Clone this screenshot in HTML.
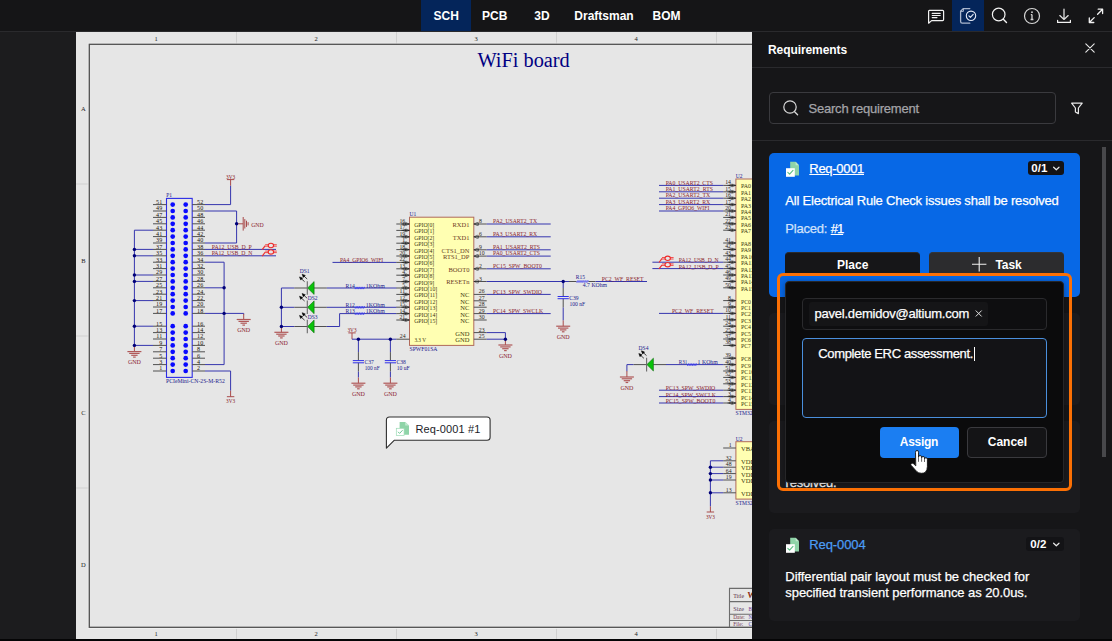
<!DOCTYPE html>
<html>
<head>
<meta charset="utf-8">
<title>Requirements</title>
<style>
*{box-sizing:border-box;margin:0;padding:0}
html,body{width:1112px;height:641px;overflow:hidden;background:#0a0a0b}
body{position:relative;font-family:"Liberation Sans",sans-serif;font-size:13px;color:#fff}
.abs{position:absolute}
.t{position:absolute;white-space:pre;line-height:16px;height:16px;-webkit-text-stroke:0.25px currentColor}
.t.b{-webkit-text-stroke:0}
#topbar{left:0;top:0;width:1112px;height:32px;background:#151517;border-bottom:1px solid #2a2a2d}
#leftdark{left:0;top:32px;width:76px;height:607px;background:#1c1c1e}
#sheet{left:76px;top:32px;width:676px;height:607px;background:#e6e6e6;overflow:hidden}
#panel{left:752px;top:32px;width:360px;height:607px;background:#161618}
.tab{position:absolute;top:1px;height:31px;font-weight:700;font-size:12px;line-height:31px;white-space:pre}
.card{position:absolute;left:769px;width:311px;background:#1b1b1e;border-radius:5px}
.badge{position:absolute;background:#131316;border-radius:3px;height:14px}
.b{font-weight:700}
</style>
</head>
<body>
<!-- top bar -->
<div id="topbar" class="abs"></div>
<div class="abs" style="left:421px;top:0;width:50px;height:31px;background:#04255a"></div>
<div class="tab" style="left:433.5px">SCH</div>
<div class="tab" style="left:482px">PCB</div>
<div class="tab" style="left:534.3px">3D</div>
<div class="tab" style="left:574.3px">Draftsman</div>
<div class="tab" style="left:652.5px">BOM</div>
<div class="abs" style="left:952px;top:0;width:32px;height:31px;background:#04255a"></div>
<svg class="abs" style="left:920px;top:0" width="192" height="32" viewBox="920 0 192 32" fill="none" stroke="#f2f2f2" stroke-width="1.2" stroke-linecap="round" stroke-linejoin="round">
<!-- comment -->
<path d="M929.4,10.3 H942.6 Q943.6,10.3 943.6,11.3 V19.6 Q943.6,20.6 942.6,20.6 H931.6 L928.6,23.2 V11.3 Q928.6,10.3 929.4,10.3 Z"/>
<path d="M932.2,13.4 H940.2 M932.2,15.5 H940.2 M932.2,17.6 H937" stroke-width="1.1"/>
<!-- requirements -->
<path d="M969.8,8.6 H963.2 L960.6,11.2 V21.6 Q960.6,23.2 962.2,23.2 H969.8" stroke="#a9b6cd" stroke-width="1.3"/>
<path d="M963.4,8.8 V11.4 H960.8" stroke="#a9b6cd" stroke-width="1"/>
<circle cx="971" cy="15.8" r="4.7" stroke="#e4eaf6" stroke-width="1.1"/>
<path d="M968.9,15.9 L970.4,17.4 L973.2,14.4" stroke="#e4eaf6" stroke-width="1.1"/>
<!-- search -->
<circle cx="998.7" cy="14.5" r="6.3"/>
<path d="M1003.3,19.2 L1006.5,22.5" stroke-width="1.4"/>
<!-- info -->
<circle cx="1032" cy="16" r="7.5" stroke="#d6d6d6"/>
<path d="M1032,14.6 V19.4 M1030.8,14.6 H1032 M1030.6,19.5 H1033.4" stroke="#d6d6d6" stroke-width="1.3" stroke-linecap="butt"/>
<circle cx="1032" cy="12.2" r="0.9" fill="#d6d6d6" stroke="none"/>
<!-- download -->
<path d="M1064,9.2 V19 M1059.8,15.6 L1064,19.4 L1068.2,15.6" stroke="#dcdcdc" stroke-width="1.3"/>
<path d="M1057.6,20.3 V22.4 H1070.4 V20.3" stroke-width="1.2"/>
<!-- expand -->
<path d="M1097.6,14.2 L1102.6,9.2 M1098.2,9.2 H1102.6 V13.6" stroke-width="1.3"/>
<path d="M1094.2,17.6 L1089.3,22.5 M1089.3,18 V22.5 H1093.8" stroke-width="1.3"/>
</svg>

<div id="leftdark" class="abs"></div>
<div id="sheet" class="abs"></div>
<!-- SCH_BEGIN -->
<svg class="abs" id="sch" style="left:76px;top:32px" width="676" height="607" viewBox="76 32 676 607" font-family="Liberation Serif, serif" fill="none" shape-rendering="auto">
<rect x="76" y="32" width="676" height="607" fill="#e6e6e6"/>
<path d="M236.5,32.0L236.5,44.3" stroke="#d0d0d0" stroke-width="1"/>
<path d="M236.5,627.3L236.5,639.0" stroke="#d0d0d0" stroke-width="1"/>
<path d="M396.5,32.0L396.5,44.3" stroke="#d0d0d0" stroke-width="1"/>
<path d="M396.5,627.3L396.5,639.0" stroke="#d0d0d0" stroke-width="1"/>
<path d="M556.5,32.0L556.5,44.3" stroke="#d0d0d0" stroke-width="1"/>
<path d="M556.5,627.3L556.5,639.0" stroke="#d0d0d0" stroke-width="1"/>
<path d="M716.5,32.0L716.5,44.3" stroke="#d0d0d0" stroke-width="1"/>
<path d="M716.5,627.3L716.5,639.0" stroke="#d0d0d0" stroke-width="1"/>
<path d="M76.0,184.0L89.3,184.0" stroke="#d0d0d0" stroke-width="1"/>
<path d="M76.0,336.0L89.3,336.0" stroke="#d0d0d0" stroke-width="1"/>
<path d="M76.0,488.0L89.3,488.0" stroke="#d0d0d0" stroke-width="1"/>
<rect x="88.2" y="43.2" width="700" height="585.2" fill="none" stroke="#f0f0f0" stroke-width="0.9"/>
<rect x="89.3" y="44.3" width="700" height="583" fill="none" stroke="#505050" stroke-width="1.3"/>
<text x="156.0" y="40.6" font-size="6.5" fill="#1e1e1e" text-anchor="middle">1</text>
<text x="156.0" y="635.8" font-size="6.5" fill="#1e1e1e" text-anchor="middle">1</text>
<text x="316.0" y="40.6" font-size="6.5" fill="#1e1e1e" text-anchor="middle">2</text>
<text x="316.0" y="635.8" font-size="6.5" fill="#1e1e1e" text-anchor="middle">2</text>
<text x="476.0" y="40.6" font-size="6.5" fill="#1e1e1e" text-anchor="middle">3</text>
<text x="476.0" y="635.8" font-size="6.5" fill="#1e1e1e" text-anchor="middle">3</text>
<text x="636.0" y="40.6" font-size="6.5" fill="#1e1e1e" text-anchor="middle">4</text>
<text x="636.0" y="635.8" font-size="6.5" fill="#1e1e1e" text-anchor="middle">4</text>
<text x="83.4" y="110.6" font-size="6.5" fill="#1e1e1e" text-anchor="middle">A</text>
<text x="83.4" y="262.6" font-size="6.5" fill="#1e1e1e" text-anchor="middle">B</text>
<text x="83.4" y="414.6" font-size="6.5" fill="#1e1e1e" text-anchor="middle">C</text>
<text x="83.4" y="566.6" font-size="6.5" fill="#1e1e1e" text-anchor="middle">D</text>
<text x="477.4" y="66.8" font-size="20" fill="#000082" text-anchor="start" textLength="92.4" lengthAdjust="spacingAndGlyphs">WiFi board</text>
<rect x="166.5" y="198.4" width="25.7" height="179" fill="none" stroke="#2c2ce6" stroke-width="1.1"/>
<text x="166.3" y="197.4" font-size="5.5" fill="#1a1a8c" text-anchor="start">P1</text>
<text x="166.0" y="383.2" font-size="6.5" fill="#1a1a8c" text-anchor="start" textLength="58.8" lengthAdjust="spacingAndGlyphs">PCIeMini-CN-2S-M-R52</text>
<path d="M153.0,204.6L166.5,204.6" stroke="#505050" stroke-width="1"/>
<path d="M192.2,204.6L205.0,204.6" stroke="#505050" stroke-width="1"/>
<circle cx="172.7" cy="204.6" r="2.35" fill="#0a0aff"/><circle cx="185.7" cy="204.6" r="2.35" fill="#0a0aff"/>
<text x="162.2" y="204.0" font-size="6.1" fill="#1c140a" text-anchor="end">51</text>
<text x="197.1" y="204.0" font-size="6.1" fill="#1c140a" text-anchor="start">52</text>
<path d="M153.0,211.0L166.5,211.0" stroke="#505050" stroke-width="1"/>
<path d="M192.2,211.0L205.0,211.0" stroke="#505050" stroke-width="1"/>
<circle cx="172.7" cy="211.0" r="2.35" fill="#0a0aff"/><circle cx="185.7" cy="211.0" r="2.35" fill="#0a0aff"/>
<text x="162.2" y="210.4" font-size="6.1" fill="#1c140a" text-anchor="end">49</text>
<text x="197.1" y="210.4" font-size="6.1" fill="#1c140a" text-anchor="start">50</text>
<path d="M153.0,217.4L166.5,217.4" stroke="#505050" stroke-width="1"/>
<path d="M192.2,217.4L205.0,217.4" stroke="#505050" stroke-width="1"/>
<circle cx="172.7" cy="217.4" r="2.35" fill="#0a0aff"/><circle cx="185.7" cy="217.4" r="2.35" fill="#0a0aff"/>
<text x="162.2" y="216.8" font-size="6.1" fill="#1c140a" text-anchor="end">47</text>
<text x="197.1" y="216.8" font-size="6.1" fill="#1c140a" text-anchor="start">48</text>
<path d="M153.0,223.8L166.5,223.8" stroke="#505050" stroke-width="1"/>
<path d="M192.2,223.8L205.0,223.8" stroke="#505050" stroke-width="1"/>
<circle cx="172.7" cy="223.8" r="2.35" fill="#0a0aff"/><circle cx="185.7" cy="223.8" r="2.35" fill="#0a0aff"/>
<text x="162.2" y="223.2" font-size="6.1" fill="#1c140a" text-anchor="end">45</text>
<text x="197.1" y="223.2" font-size="6.1" fill="#1c140a" text-anchor="start">46</text>
<path d="M153.0,230.2L166.5,230.2" stroke="#505050" stroke-width="1"/>
<path d="M192.2,230.2L205.0,230.2" stroke="#505050" stroke-width="1"/>
<circle cx="172.7" cy="230.2" r="2.35" fill="#0a0aff"/><circle cx="185.7" cy="230.2" r="2.35" fill="#0a0aff"/>
<text x="162.2" y="229.6" font-size="6.1" fill="#1c140a" text-anchor="end">43</text>
<text x="197.1" y="229.6" font-size="6.1" fill="#1c140a" text-anchor="start">44</text>
<path d="M153.0,236.6L166.5,236.6" stroke="#505050" stroke-width="1"/>
<path d="M192.2,236.6L205.0,236.6" stroke="#505050" stroke-width="1"/>
<circle cx="172.7" cy="236.6" r="2.35" fill="#0a0aff"/><circle cx="185.7" cy="236.6" r="2.35" fill="#0a0aff"/>
<text x="162.2" y="236.0" font-size="6.1" fill="#1c140a" text-anchor="end">41</text>
<text x="197.1" y="236.0" font-size="6.1" fill="#1c140a" text-anchor="start">42</text>
<path d="M153.0,243.0L166.5,243.0" stroke="#505050" stroke-width="1"/>
<path d="M192.2,243.0L205.0,243.0" stroke="#505050" stroke-width="1"/>
<circle cx="172.7" cy="243.0" r="2.35" fill="#0a0aff"/><circle cx="185.7" cy="243.0" r="2.35" fill="#0a0aff"/>
<text x="162.2" y="242.4" font-size="6.1" fill="#1c140a" text-anchor="end">39</text>
<text x="197.1" y="242.4" font-size="6.1" fill="#1c140a" text-anchor="start">40</text>
<path d="M153.0,249.4L166.5,249.4" stroke="#505050" stroke-width="1"/>
<path d="M192.2,249.4L205.0,249.4" stroke="#505050" stroke-width="1"/>
<circle cx="172.7" cy="249.4" r="2.35" fill="#0a0aff"/><circle cx="185.7" cy="249.4" r="2.35" fill="#0a0aff"/>
<text x="162.2" y="248.8" font-size="6.1" fill="#1c140a" text-anchor="end">37</text>
<text x="197.1" y="248.8" font-size="6.1" fill="#1c140a" text-anchor="start">38</text>
<path d="M153.0,255.8L166.5,255.8" stroke="#505050" stroke-width="1"/>
<path d="M192.2,255.8L205.0,255.8" stroke="#505050" stroke-width="1"/>
<circle cx="172.7" cy="255.8" r="2.35" fill="#0a0aff"/><circle cx="185.7" cy="255.8" r="2.35" fill="#0a0aff"/>
<text x="162.2" y="255.2" font-size="6.1" fill="#1c140a" text-anchor="end">35</text>
<text x="197.1" y="255.2" font-size="6.1" fill="#1c140a" text-anchor="start">36</text>
<path d="M153.0,262.2L166.5,262.2" stroke="#505050" stroke-width="1"/>
<path d="M192.2,262.2L205.0,262.2" stroke="#505050" stroke-width="1"/>
<circle cx="172.7" cy="262.2" r="2.35" fill="#0a0aff"/><circle cx="185.7" cy="262.2" r="2.35" fill="#0a0aff"/>
<text x="162.2" y="261.6" font-size="6.1" fill="#1c140a" text-anchor="end">33</text>
<text x="197.1" y="261.6" font-size="6.1" fill="#1c140a" text-anchor="start">34</text>
<path d="M153.0,268.6L166.5,268.6" stroke="#505050" stroke-width="1"/>
<path d="M192.2,268.6L205.0,268.6" stroke="#505050" stroke-width="1"/>
<circle cx="172.7" cy="268.6" r="2.35" fill="#0a0aff"/><circle cx="185.7" cy="268.6" r="2.35" fill="#0a0aff"/>
<text x="162.2" y="268.0" font-size="6.1" fill="#1c140a" text-anchor="end">31</text>
<text x="197.1" y="268.0" font-size="6.1" fill="#1c140a" text-anchor="start">32</text>
<path d="M153.0,275.0L166.5,275.0" stroke="#505050" stroke-width="1"/>
<path d="M192.2,275.0L205.0,275.0" stroke="#505050" stroke-width="1"/>
<circle cx="172.7" cy="275.0" r="2.35" fill="#0a0aff"/><circle cx="185.7" cy="275.0" r="2.35" fill="#0a0aff"/>
<text x="162.2" y="274.4" font-size="6.1" fill="#1c140a" text-anchor="end">29</text>
<text x="197.1" y="274.4" font-size="6.1" fill="#1c140a" text-anchor="start">30</text>
<path d="M153.0,281.4L166.5,281.4" stroke="#505050" stroke-width="1"/>
<path d="M192.2,281.4L205.0,281.4" stroke="#505050" stroke-width="1"/>
<circle cx="172.7" cy="281.4" r="2.35" fill="#0a0aff"/><circle cx="185.7" cy="281.4" r="2.35" fill="#0a0aff"/>
<text x="162.2" y="280.8" font-size="6.1" fill="#1c140a" text-anchor="end">27</text>
<text x="197.1" y="280.8" font-size="6.1" fill="#1c140a" text-anchor="start">28</text>
<path d="M153.0,287.8L166.5,287.8" stroke="#505050" stroke-width="1"/>
<path d="M192.2,287.8L205.0,287.8" stroke="#505050" stroke-width="1"/>
<circle cx="172.7" cy="287.8" r="2.35" fill="#0a0aff"/><circle cx="185.7" cy="287.8" r="2.35" fill="#0a0aff"/>
<text x="162.2" y="287.2" font-size="6.1" fill="#1c140a" text-anchor="end">25</text>
<text x="197.1" y="287.2" font-size="6.1" fill="#1c140a" text-anchor="start">26</text>
<path d="M153.0,294.2L166.5,294.2" stroke="#505050" stroke-width="1"/>
<path d="M192.2,294.2L205.0,294.2" stroke="#505050" stroke-width="1"/>
<circle cx="172.7" cy="294.2" r="2.35" fill="#0a0aff"/><circle cx="185.7" cy="294.2" r="2.35" fill="#0a0aff"/>
<text x="162.2" y="293.6" font-size="6.1" fill="#1c140a" text-anchor="end">23</text>
<text x="197.1" y="293.6" font-size="6.1" fill="#1c140a" text-anchor="start">24</text>
<path d="M153.0,300.6L166.5,300.6" stroke="#505050" stroke-width="1"/>
<path d="M192.2,300.6L205.0,300.6" stroke="#505050" stroke-width="1"/>
<circle cx="172.7" cy="300.6" r="2.35" fill="#0a0aff"/><circle cx="185.7" cy="300.6" r="2.35" fill="#0a0aff"/>
<text x="162.2" y="300.0" font-size="6.1" fill="#1c140a" text-anchor="end">21</text>
<text x="197.1" y="300.0" font-size="6.1" fill="#1c140a" text-anchor="start">22</text>
<path d="M153.0,307.0L166.5,307.0" stroke="#505050" stroke-width="1"/>
<path d="M192.2,307.0L205.0,307.0" stroke="#505050" stroke-width="1"/>
<circle cx="172.7" cy="307.0" r="2.35" fill="#0a0aff"/><circle cx="185.7" cy="307.0" r="2.35" fill="#0a0aff"/>
<text x="162.2" y="306.4" font-size="6.1" fill="#1c140a" text-anchor="end">19</text>
<text x="197.1" y="306.4" font-size="6.1" fill="#1c140a" text-anchor="start">20</text>
<path d="M153.0,313.4L166.5,313.4" stroke="#505050" stroke-width="1"/>
<path d="M192.2,313.4L205.0,313.4" stroke="#505050" stroke-width="1"/>
<circle cx="172.7" cy="313.4" r="2.35" fill="#0a0aff"/><circle cx="185.7" cy="313.4" r="2.35" fill="#0a0aff"/>
<text x="162.2" y="312.8" font-size="6.1" fill="#1c140a" text-anchor="end">17</text>
<text x="197.1" y="312.8" font-size="6.1" fill="#1c140a" text-anchor="start">18</text>
<path d="M153.0,326.2L166.5,326.2" stroke="#505050" stroke-width="1"/>
<path d="M192.2,326.2L205.0,326.2" stroke="#505050" stroke-width="1"/>
<circle cx="172.7" cy="326.2" r="2.35" fill="#0a0aff"/><circle cx="185.7" cy="326.2" r="2.35" fill="#0a0aff"/>
<text x="162.2" y="325.6" font-size="6.1" fill="#1c140a" text-anchor="end">15</text>
<text x="197.1" y="325.6" font-size="6.1" fill="#1c140a" text-anchor="start">16</text>
<path d="M153.0,332.6L166.5,332.6" stroke="#505050" stroke-width="1"/>
<path d="M192.2,332.6L205.0,332.6" stroke="#505050" stroke-width="1"/>
<circle cx="172.7" cy="332.6" r="2.35" fill="#0a0aff"/><circle cx="185.7" cy="332.6" r="2.35" fill="#0a0aff"/>
<text x="162.2" y="332.0" font-size="6.1" fill="#1c140a" text-anchor="end">13</text>
<text x="197.1" y="332.0" font-size="6.1" fill="#1c140a" text-anchor="start">14</text>
<path d="M153.0,339.0L166.5,339.0" stroke="#505050" stroke-width="1"/>
<path d="M192.2,339.0L205.0,339.0" stroke="#505050" stroke-width="1"/>
<circle cx="172.7" cy="339.0" r="2.35" fill="#0a0aff"/><circle cx="185.7" cy="339.0" r="2.35" fill="#0a0aff"/>
<text x="162.2" y="338.4" font-size="6.1" fill="#1c140a" text-anchor="end">11</text>
<text x="197.1" y="338.4" font-size="6.1" fill="#1c140a" text-anchor="start">12</text>
<path d="M153.0,345.4L166.5,345.4" stroke="#505050" stroke-width="1"/>
<path d="M192.2,345.4L205.0,345.4" stroke="#505050" stroke-width="1"/>
<circle cx="172.7" cy="345.4" r="2.35" fill="#0a0aff"/><circle cx="185.7" cy="345.4" r="2.35" fill="#0a0aff"/>
<text x="162.2" y="344.8" font-size="6.1" fill="#1c140a" text-anchor="end">9</text>
<text x="197.1" y="344.8" font-size="6.1" fill="#1c140a" text-anchor="start">10</text>
<path d="M153.0,351.8L166.5,351.8" stroke="#505050" stroke-width="1"/>
<path d="M192.2,351.8L205.0,351.8" stroke="#505050" stroke-width="1"/>
<circle cx="172.7" cy="351.8" r="2.35" fill="#0a0aff"/><circle cx="185.7" cy="351.8" r="2.35" fill="#0a0aff"/>
<text x="162.2" y="351.2" font-size="6.1" fill="#1c140a" text-anchor="end">7</text>
<text x="197.1" y="351.2" font-size="6.1" fill="#1c140a" text-anchor="start">8</text>
<path d="M153.0,358.2L166.5,358.2" stroke="#505050" stroke-width="1"/>
<path d="M192.2,358.2L205.0,358.2" stroke="#505050" stroke-width="1"/>
<circle cx="172.7" cy="358.2" r="2.35" fill="#0a0aff"/><circle cx="185.7" cy="358.2" r="2.35" fill="#0a0aff"/>
<text x="162.2" y="357.6" font-size="6.1" fill="#1c140a" text-anchor="end">5</text>
<text x="197.1" y="357.6" font-size="6.1" fill="#1c140a" text-anchor="start">6</text>
<path d="M153.0,364.6L166.5,364.6" stroke="#505050" stroke-width="1"/>
<path d="M192.2,364.6L205.0,364.6" stroke="#505050" stroke-width="1"/>
<circle cx="172.7" cy="364.6" r="2.35" fill="#0a0aff"/><circle cx="185.7" cy="364.6" r="2.35" fill="#0a0aff"/>
<text x="162.2" y="364.0" font-size="6.1" fill="#1c140a" text-anchor="end">3</text>
<text x="197.1" y="364.0" font-size="6.1" fill="#1c140a" text-anchor="start">4</text>
<path d="M153.0,371.0L166.5,371.0" stroke="#505050" stroke-width="1"/>
<path d="M192.2,371.0L205.0,371.0" stroke="#505050" stroke-width="1"/>
<circle cx="172.7" cy="371.0" r="2.35" fill="#0a0aff"/><circle cx="185.7" cy="371.0" r="2.35" fill="#0a0aff"/>
<text x="162.2" y="370.4" font-size="6.1" fill="#1c140a" text-anchor="end">1</text>
<text x="197.1" y="370.4" font-size="6.1" fill="#1c140a" text-anchor="start">2</text>
<path d="M205.0,204.6L230.6,204.6L230.6,185.6" stroke="#3535ae" stroke-width="1" fill="none"/>
<path d="M230.6,185.6L230.6,179.6" stroke="#a84a4a" stroke-width="1"/>
<path d="M226.9,179.6L234.3,179.6" stroke="#a84a4a" stroke-width="1"/>
<text x="230.6" y="179.0" font-size="6.5" fill="#8a1c2c" text-anchor="middle" textLength="9.0" lengthAdjust="spacingAndGlyphs">3V3</text>
<path d="M205.0,211.0L236.6,211.0L236.6,243.0L205.0,243.0" stroke="#3535ae" stroke-width="1" fill="none"/>
<path d="M236.6,223.8L243.2,223.8" stroke="#a84a4a" stroke-width="1"/>
<path d="M243.2,217.0L243.2,230.6" stroke="#a84a4a" stroke-width="1"/>
<path d="M244.8,219.1L244.8,228.5" stroke="#a84a4a" stroke-width="1"/>
<path d="M246.5,220.7L246.5,226.9" stroke="#a84a4a" stroke-width="1"/>
<path d="M248.1,222.2L248.1,225.4" stroke="#a84a4a" stroke-width="1"/>
<text x="251.2" y="226.7" font-size="6.5" fill="#8a1c2c" text-anchor="start" textLength="12.5" lengthAdjust="spacingAndGlyphs">GND</text>
<path d="M205.0,249.4L276.0,249.4" stroke="#3535ae" stroke-width="1"/>
<path d="M205.0,255.8L276.0,255.8" stroke="#3535ae" stroke-width="1"/>
<text x="211.7" y="248.6" font-size="6.5" fill="#8a1c2c" text-anchor="start" textLength="40.0" lengthAdjust="spacingAndGlyphs">PA12_USB_D_P</text>
<text x="211.7" y="255.0" font-size="6.5" fill="#8a1c2c" text-anchor="start" textLength="40.6" lengthAdjust="spacingAndGlyphs">PA12_USB_D_N</text>
<path d="M262.2,249.7L265.3,245.6" stroke="#ee3030" stroke-width="1.2" fill="none"/>
<path d="M265.2,244.7H276.8M265.2,246.2H276.8" stroke="#f04040" stroke-width="0.9" fill="none"/>
<ellipse cx="270.9" cy="245.5" rx="2.7" ry="2.2" stroke="#ee2a2a" stroke-width="1.1" fill="#e6e6e6"/>
<path d="M262.2,256.1L265.3,252.0" stroke="#ee3030" stroke-width="1.2" fill="none"/>
<path d="M265.2,251.1H276.8M265.2,252.6H276.8" stroke="#f04040" stroke-width="0.9" fill="none"/>
<ellipse cx="270.9" cy="251.9" rx="2.7" ry="2.2" stroke="#ee2a2a" stroke-width="1.1" fill="#e6e6e6"/>
<path d="M205.0,262.2L224.1,262.2L224.1,364.6L205.0,364.6" stroke="#3535ae" stroke-width="1" fill="none"/>
<path d="M205.0,287.8L224.1,287.8" stroke="#3535ae" stroke-width="1"/>
<path d="M205.0,313.4L243.7,313.4L243.7,314.4" stroke="#3535ae" stroke-width="1" fill="none"/>
<path d="M243.7,313.9L243.7,319.5" stroke="#a84a4a" stroke-width="1"/>
<path d="M236.7,319.5L250.7,319.5" stroke="#b05858" stroke-width="1.2"/>
<path d="M238.5,321.4L248.9,321.4" stroke="#b05858" stroke-width="1.2"/>
<path d="M240.5,323.2L246.9,323.2" stroke="#b05858" stroke-width="1.2"/>
<path d="M242.4,325.1L245.0,325.1" stroke="#b05858" stroke-width="1.2"/>
<text x="243.7" y="332.1" font-size="6.5" fill="#8a1c2c" text-anchor="middle" textLength="13.0" lengthAdjust="spacingAndGlyphs">GND</text>
<path d="M205.0,371.0L230.6,371.0L230.6,390.7" stroke="#3535ae" stroke-width="1" fill="none"/>
<path d="M230.6,390.7L230.6,396.7" stroke="#a84a4a" stroke-width="1"/>
<path d="M226.9,396.7L234.3,396.7" stroke="#a84a4a" stroke-width="1"/>
<text x="230.6" y="403.3" font-size="6.5" fill="#8a1c2c" text-anchor="middle" textLength="9.0" lengthAdjust="spacingAndGlyphs">3V3</text>
<path d="M153.0,230.2L134.4,230.2L134.4,345.4" stroke="#3535ae" stroke-width="1" fill="none"/>
<path d="M134.4,249.4L153.0,249.4" stroke="#3535ae" stroke-width="1"/>
<path d="M134.4,255.8L153.0,255.8" stroke="#3535ae" stroke-width="1"/>
<path d="M134.4,275.0L153.0,275.0" stroke="#3535ae" stroke-width="1"/>
<path d="M134.4,281.4L153.0,281.4" stroke="#3535ae" stroke-width="1"/>
<path d="M134.4,300.6L153.0,300.6" stroke="#3535ae" stroke-width="1"/>
<path d="M134.4,326.2L153.0,326.2" stroke="#3535ae" stroke-width="1"/>
<path d="M134.4,345.4L153.0,345.4" stroke="#3535ae" stroke-width="1"/>
<path d="M134.4,345.4L134.4,351.6" stroke="#a84a4a" stroke-width="1"/>
<path d="M127.4,351.6L141.4,351.6" stroke="#b05858" stroke-width="1.2"/>
<path d="M129.2,353.4L139.6,353.4" stroke="#b05858" stroke-width="1.2"/>
<path d="M131.2,355.3L137.6,355.3" stroke="#b05858" stroke-width="1.2"/>
<path d="M133.1,357.1L135.7,357.1" stroke="#b05858" stroke-width="1.2"/>
<text x="134.4" y="364.2" font-size="6.5" fill="#8a1c2c" text-anchor="middle" textLength="13.0" lengthAdjust="spacingAndGlyphs">GND</text>
<path d="M294.3,288.0L281.4,288.0L281.4,326.5L294.3,326.5" stroke="#3535ae" stroke-width="1" fill="none"/>
<path d="M281.4,307.3L294.3,307.3" stroke="#3535ae" stroke-width="1"/>
<path d="M281.4,326.5L281.4,332.3" stroke="#a84a4a" stroke-width="1"/>
<path d="M274.4,332.3L288.4,332.3" stroke="#b05858" stroke-width="1.2"/>
<path d="M276.2,334.2L286.6,334.2" stroke="#b05858" stroke-width="1.2"/>
<path d="M278.2,336.0L284.6,336.0" stroke="#b05858" stroke-width="1.2"/>
<path d="M280.1,337.9L282.7,337.9" stroke="#b05858" stroke-width="1.2"/>
<text x="281.4" y="344.9" font-size="6.5" fill="#8a1c2c" text-anchor="middle" textLength="13.0" lengthAdjust="spacingAndGlyphs">GND</text>
<path d="M294.3,288.0L307.3,288.0" stroke="#505050" stroke-width="1"/>
<path d="M313.9,288.0L326.8,288.0" stroke="#505050" stroke-width="1"/>
<path d="M307.6,288.0L314.1,281.6L314.1,294.4Z" fill="#0ac20a" stroke="#0a6a0a" stroke-width="0.6"/>
<path d="M307.3,281.2L307.3,294.8" stroke="#6a6a6a" stroke-width="1.1"/>
<path d="M301.1,278.5l3.5,3.2" stroke="#111" stroke-width="0.8"/>
<path d="M299.5,276.9l3.2,1.2l-2,2z" fill="#000" stroke="#000" stroke-width="0.5" stroke-linejoin="round"/>
<path d="M303.7,275.8l3.5,3.2" stroke="#111" stroke-width="0.8"/>
<path d="M302.1,274.2l3.2,1.2l-2,2z" fill="#000" stroke="#000" stroke-width="0.5" stroke-linejoin="round"/>
<text x="299.8" y="273.0" font-size="6.5" fill="#1a1a8c" text-anchor="start" textLength="9.8" lengthAdjust="spacingAndGlyphs">DS1</text>
<path d="M294.3,307.3L307.3,307.3" stroke="#505050" stroke-width="1"/>
<path d="M313.9,307.3L326.8,307.3" stroke="#505050" stroke-width="1"/>
<path d="M307.6,307.3L314.1,300.9L314.1,313.7Z" fill="#0ac20a" stroke="#0a6a0a" stroke-width="0.6"/>
<path d="M307.3,300.5L307.3,314.1" stroke="#6a6a6a" stroke-width="1.1"/>
<path d="M301.1,297.8l3.5,3.2" stroke="#111" stroke-width="0.8"/>
<path d="M299.5,296.2l3.2,1.2l-2,2z" fill="#000" stroke="#000" stroke-width="0.5" stroke-linejoin="round"/>
<path d="M303.7,295.1l3.5,3.2" stroke="#111" stroke-width="0.8"/>
<path d="M302.1,293.5l3.2,1.2l-2,2z" fill="#000" stroke="#000" stroke-width="0.5" stroke-linejoin="round"/>
<text x="307.8" y="299.8" font-size="6.5" fill="#1a1a8c" text-anchor="start" textLength="9.8" lengthAdjust="spacingAndGlyphs">DS2</text>
<path d="M294.3,326.5L307.3,326.5" stroke="#505050" stroke-width="1"/>
<path d="M313.9,326.5L326.8,326.5" stroke="#505050" stroke-width="1"/>
<path d="M307.6,326.5L314.1,320.1L314.1,332.9Z" fill="#0ac20a" stroke="#0a6a0a" stroke-width="0.6"/>
<path d="M307.3,319.7L307.3,333.3" stroke="#6a6a6a" stroke-width="1.1"/>
<path d="M301.1,317.0l3.5,3.2" stroke="#111" stroke-width="0.8"/>
<path d="M299.5,315.4l3.2,1.2l-2,2z" fill="#000" stroke="#000" stroke-width="0.5" stroke-linejoin="round"/>
<path d="M303.7,314.3l3.5,3.2" stroke="#111" stroke-width="0.8"/>
<path d="M302.1,312.7l3.2,1.2l-2,2z" fill="#000" stroke="#000" stroke-width="0.5" stroke-linejoin="round"/>
<text x="307.8" y="319.0" font-size="6.5" fill="#1a1a8c" text-anchor="start" textLength="9.8" lengthAdjust="spacingAndGlyphs">DS3</text>
<path d="M326.8,288.0L396.5,288.0" stroke="#3535ae" stroke-width="1"/>
<path d="M354.9,288.0L355.3,289.1L356.1,286.9L357.0,289.1L357.8,286.9L358.6,289.1L359.4,286.9L360.3,289.1L361.1,286.9L361.9,289.1L362.7,286.9L363.6,289.1L364.4,286.9L364.8,288.0" stroke="#3c3cf0" stroke-width="0.7" fill="none"/>
<text x="345.5" y="287.6" font-size="6.5" fill="#1a1a8c" text-anchor="start" textLength="9.4" lengthAdjust="spacingAndGlyphs">R14</text>
<text x="365.8" y="287.6" font-size="6.5" fill="#1a1a8c" text-anchor="start" textLength="19.0" lengthAdjust="spacingAndGlyphs">1KOhm</text>
<path d="M326.8,307.3L396.5,307.3" stroke="#3535ae" stroke-width="1"/>
<path d="M354.9,307.3L355.3,308.4L356.1,306.2L357.0,308.4L357.8,306.2L358.6,308.4L359.4,306.2L360.3,308.4L361.1,306.2L361.9,308.4L362.7,306.2L363.6,308.4L364.4,306.2L364.8,307.3" stroke="#3c3cf0" stroke-width="0.7" fill="none"/>
<text x="345.5" y="306.9" font-size="6.5" fill="#1a1a8c" text-anchor="start" textLength="9.4" lengthAdjust="spacingAndGlyphs">R12</text>
<text x="365.8" y="306.9" font-size="6.5" fill="#1a1a8c" text-anchor="start" textLength="19.0" lengthAdjust="spacingAndGlyphs">1KOhm</text>
<path d="M326.8,326.5L339.6,326.5L339.6,313.6L396.5,313.6" stroke="#3535ae" stroke-width="1" fill="none"/>
<path d="M354.9,313.6L355.3,314.7L356.1,312.5L357.0,314.7L357.8,312.5L358.6,314.7L359.4,312.5L360.3,314.7L361.1,312.5L361.9,314.7L362.7,312.5L363.6,314.7L364.4,312.5L364.8,313.6" stroke="#3c3cf0" stroke-width="0.7" fill="none"/>
<text x="345.5" y="313.2" font-size="6.5" fill="#1a1a8c" text-anchor="start" textLength="9.4" lengthAdjust="spacingAndGlyphs">R13</text>
<text x="365.8" y="313.2" font-size="6.5" fill="#1a1a8c" text-anchor="start" textLength="19.0" lengthAdjust="spacingAndGlyphs">1KOhm</text>
<path d="M332.5,262.4L396.5,262.4" stroke="#3535ae" stroke-width="1"/>
<text x="339.9" y="261.6" font-size="6.5" fill="#8a1c2c" text-anchor="start" textLength="43.3" lengthAdjust="spacingAndGlyphs">PA4_GPIO6_WIFI</text>
<rect x="409.5" y="217.2" width="64.3" height="128.2" fill="#ffffb2" stroke="#b06a5a" stroke-width="1"/>
<text x="409.6" y="216.2" font-size="5.5" fill="#1a1a8c" text-anchor="start">U1</text>
<text x="409.5" y="351.2" font-size="6.5" fill="#1a1a8c" text-anchor="start" textLength="28.0" lengthAdjust="spacingAndGlyphs">SPWF01SA</text>
<path d="M396.3,224.0L409.5,224.0" stroke="#505050" stroke-width="1"/>
<path d="M401.1,224.0H409.5" stroke="#3a3a3a" stroke-width="0.75"/>
<path d="M402.5,224.0l3,-1.4v2.8zM409.1,224.0l-3,-1.4v2.8z" fill="none" stroke="#181818" stroke-width="0.5"/>
<text x="405.2" y="223.0" font-size="5.8" fill="#2c2418" text-anchor="end">16</text>
<text x="414.2" y="226.9" font-size="6.5" fill="#40380f" text-anchor="start" textLength="20.0" lengthAdjust="spacingAndGlyphs">GPIO[0]</text>
<path d="M396.3,230.4L409.5,230.4" stroke="#505050" stroke-width="1"/>
<path d="M401.1,230.4H409.5" stroke="#3a3a3a" stroke-width="0.75"/>
<path d="M402.5,230.4l3,-1.4v2.8zM409.1,230.4l-3,-1.4v2.8z" fill="none" stroke="#181818" stroke-width="0.5"/>
<text x="405.2" y="229.4" font-size="5.8" fill="#2c2418" text-anchor="end">17</text>
<text x="414.2" y="233.3" font-size="6.5" fill="#40380f" text-anchor="start" textLength="20.0" lengthAdjust="spacingAndGlyphs">GPIO[1]</text>
<path d="M396.3,236.8L409.5,236.8" stroke="#505050" stroke-width="1"/>
<path d="M401.1,236.8H409.5" stroke="#3a3a3a" stroke-width="0.75"/>
<path d="M402.5,236.8l3,-1.4v2.8zM409.1,236.8l-3,-1.4v2.8z" fill="none" stroke="#181818" stroke-width="0.5"/>
<text x="405.2" y="235.8" font-size="5.8" fill="#2c2418" text-anchor="end">19</text>
<text x="414.2" y="239.7" font-size="6.5" fill="#40380f" text-anchor="start" textLength="20.0" lengthAdjust="spacingAndGlyphs">GPIO[2]</text>
<path d="M396.3,243.2L409.5,243.2" stroke="#505050" stroke-width="1"/>
<path d="M401.1,243.2H409.5" stroke="#3a3a3a" stroke-width="0.75"/>
<path d="M402.5,243.2l3,-1.4v2.8zM409.1,243.2l-3,-1.4v2.8z" fill="none" stroke="#181818" stroke-width="0.5"/>
<text x="405.2" y="242.2" font-size="5.8" fill="#2c2418" text-anchor="end">1</text>
<text x="414.2" y="246.1" font-size="6.5" fill="#40380f" text-anchor="start" textLength="20.0" lengthAdjust="spacingAndGlyphs">GPIO[3]</text>
<path d="M396.3,249.6L409.5,249.6" stroke="#505050" stroke-width="1"/>
<path d="M401.1,249.6H409.5" stroke="#3a3a3a" stroke-width="0.75"/>
<path d="M402.5,249.6l3,-1.4v2.8zM409.1,249.6l-3,-1.4v2.8z" fill="none" stroke="#181818" stroke-width="0.5"/>
<text x="405.2" y="248.6" font-size="5.8" fill="#2c2418" text-anchor="end">18</text>
<text x="414.2" y="252.5" font-size="6.5" fill="#40380f" text-anchor="start" textLength="20.0" lengthAdjust="spacingAndGlyphs">GPIO[4]</text>
<path d="M396.3,256.0L409.5,256.0" stroke="#505050" stroke-width="1"/>
<path d="M401.1,256.0H409.5" stroke="#3a3a3a" stroke-width="0.75"/>
<path d="M402.5,256.0l3,-1.4v2.8zM409.1,256.0l-3,-1.4v2.8z" fill="none" stroke="#181818" stroke-width="0.5"/>
<text x="405.2" y="255.0" font-size="5.8" fill="#2c2418" text-anchor="end">20</text>
<text x="414.2" y="258.9" font-size="6.5" fill="#40380f" text-anchor="start" textLength="20.0" lengthAdjust="spacingAndGlyphs">GPIO[5]</text>
<path d="M396.3,262.4L409.5,262.4" stroke="#505050" stroke-width="1"/>
<path d="M401.1,262.4H409.5" stroke="#3a3a3a" stroke-width="0.75"/>
<path d="M402.5,262.4l3,-1.4v2.8zM409.1,262.4l-3,-1.4v2.8z" fill="none" stroke="#181818" stroke-width="0.5"/>
<text x="405.2" y="261.4" font-size="5.8" fill="#2c2418" text-anchor="end">22</text>
<text x="414.2" y="265.3" font-size="6.5" fill="#40380f" text-anchor="start" textLength="20.0" lengthAdjust="spacingAndGlyphs">GPIO[6]</text>
<path d="M396.3,268.8L409.5,268.8" stroke="#505050" stroke-width="1"/>
<path d="M401.1,268.8H409.5" stroke="#3a3a3a" stroke-width="0.75"/>
<path d="M402.5,268.8l3,-1.4v2.8zM409.1,268.8l-3,-1.4v2.8z" fill="none" stroke="#181818" stroke-width="0.5"/>
<text x="405.2" y="267.8" font-size="5.8" fill="#2c2418" text-anchor="end">13</text>
<text x="414.2" y="271.7" font-size="6.5" fill="#40380f" text-anchor="start" textLength="20.0" lengthAdjust="spacingAndGlyphs">GPIO[7]</text>
<path d="M396.3,275.2L409.5,275.2" stroke="#505050" stroke-width="1"/>
<path d="M401.1,275.2H409.5" stroke="#3a3a3a" stroke-width="0.75"/>
<path d="M402.5,275.2l3,-1.4v2.8zM409.1,275.2l-3,-1.4v2.8z" fill="none" stroke="#181818" stroke-width="0.5"/>
<text x="405.2" y="274.2" font-size="5.8" fill="#2c2418" text-anchor="end">4</text>
<text x="414.2" y="278.1" font-size="6.5" fill="#40380f" text-anchor="start" textLength="20.0" lengthAdjust="spacingAndGlyphs">GPIO[8]</text>
<path d="M396.3,281.6L409.5,281.6" stroke="#505050" stroke-width="1"/>
<path d="M401.1,281.6H409.5" stroke="#3a3a3a" stroke-width="0.75"/>
<path d="M402.5,281.6l3,-1.4v2.8zM409.1,281.6l-3,-1.4v2.8z" fill="none" stroke="#181818" stroke-width="0.5"/>
<text x="405.2" y="280.6" font-size="5.8" fill="#2c2418" text-anchor="end">7</text>
<text x="414.2" y="284.5" font-size="6.5" fill="#40380f" text-anchor="start" textLength="20.0" lengthAdjust="spacingAndGlyphs">GPIO[9]</text>
<path d="M396.3,288.0L409.5,288.0" stroke="#505050" stroke-width="1"/>
<path d="M401.1,288.0H409.5" stroke="#3a3a3a" stroke-width="0.75"/>
<path d="M402.5,288.0l3,-1.4v2.8zM409.1,288.0l-3,-1.4v2.8z" fill="none" stroke="#181818" stroke-width="0.5"/>
<text x="405.2" y="287.0" font-size="5.8" fill="#2c2418" text-anchor="end">5</text>
<text x="414.2" y="290.9" font-size="6.5" fill="#40380f" text-anchor="start" textLength="23.0" lengthAdjust="spacingAndGlyphs">GPIO[10]</text>
<path d="M396.3,294.4L409.5,294.4" stroke="#505050" stroke-width="1"/>
<path d="M401.1,294.4H409.5" stroke="#3a3a3a" stroke-width="0.75"/>
<path d="M402.5,294.4l3,-1.4v2.8zM409.1,294.4l-3,-1.4v2.8z" fill="none" stroke="#181818" stroke-width="0.5"/>
<text x="405.2" y="293.4" font-size="5.8" fill="#2c2418" text-anchor="end">11</text>
<text x="414.2" y="297.3" font-size="6.5" fill="#40380f" text-anchor="start" textLength="23.0" lengthAdjust="spacingAndGlyphs">GPIO[11]</text>
<path d="M396.3,300.8L409.5,300.8" stroke="#505050" stroke-width="1"/>
<path d="M401.1,300.8H409.5" stroke="#3a3a3a" stroke-width="0.75"/>
<path d="M402.5,300.8l3,-1.4v2.8zM409.1,300.8l-3,-1.4v2.8z" fill="none" stroke="#181818" stroke-width="0.5"/>
<text x="405.2" y="299.8" font-size="5.8" fill="#2c2418" text-anchor="end">12</text>
<text x="414.2" y="303.7" font-size="6.5" fill="#40380f" text-anchor="start" textLength="23.0" lengthAdjust="spacingAndGlyphs">GPIO[12]</text>
<path d="M396.3,307.2L409.5,307.2" stroke="#505050" stroke-width="1"/>
<path d="M401.1,307.2H409.5" stroke="#3a3a3a" stroke-width="0.75"/>
<path d="M402.5,307.2l3,-1.4v2.8zM409.1,307.2l-3,-1.4v2.8z" fill="none" stroke="#181818" stroke-width="0.5"/>
<text x="405.2" y="306.2" font-size="5.8" fill="#2c2418" text-anchor="end">15</text>
<text x="414.2" y="310.1" font-size="6.5" fill="#40380f" text-anchor="start" textLength="23.0" lengthAdjust="spacingAndGlyphs">GPIO[13]</text>
<path d="M396.3,313.6L409.5,313.6" stroke="#505050" stroke-width="1"/>
<path d="M401.1,313.6H409.5" stroke="#3a3a3a" stroke-width="0.75"/>
<path d="M402.5,313.6l3,-1.4v2.8zM409.1,313.6l-3,-1.4v2.8z" fill="none" stroke="#181818" stroke-width="0.5"/>
<text x="405.2" y="312.6" font-size="5.8" fill="#2c2418" text-anchor="end">14</text>
<text x="414.2" y="316.5" font-size="6.5" fill="#40380f" text-anchor="start" textLength="23.0" lengthAdjust="spacingAndGlyphs">GPIO[14]</text>
<path d="M396.3,320.0L409.5,320.0" stroke="#505050" stroke-width="1"/>
<path d="M401.1,320.0H409.5" stroke="#3a3a3a" stroke-width="0.75"/>
<path d="M402.5,320.0l3,-1.4v2.8zM409.1,320.0l-3,-1.4v2.8z" fill="none" stroke="#181818" stroke-width="0.5"/>
<text x="405.2" y="319.0" font-size="5.8" fill="#2c2418" text-anchor="end">21</text>
<text x="414.2" y="322.9" font-size="6.5" fill="#40380f" text-anchor="start" textLength="23.0" lengthAdjust="spacingAndGlyphs">GPIO[15]</text>
<path d="M473.8,224.0L486.7,224.0" stroke="#505050" stroke-width="1"/>
<path d="M473.8,224.0H478.8" stroke="#3a3a3a" stroke-width="0.75"/>
<path d="M474.3,224.0l2.6,-1.5h1.4v3h-1.4z" fill="none" stroke="#181818" stroke-width="0.5"/>
<text x="479.0" y="223.0" font-size="5.8" fill="#2c2418" text-anchor="start">8</text>
<text x="469.4" y="226.9" font-size="6.5" fill="#6a3a1e" text-anchor="end">RXD1</text>
<path d="M486.7,224.0L550.7,224.0" stroke="#3535ae" stroke-width="1"/>
<text x="493.0" y="223.2" font-size="6.5" fill="#8a1c2c" text-anchor="start" textLength="44.0" lengthAdjust="spacingAndGlyphs">PA2_USART2_TX</text>
<path d="M473.8,236.8L486.7,236.8" stroke="#505050" stroke-width="1"/>
<path d="M473.8,236.8H478.8" stroke="#3a3a3a" stroke-width="0.75"/>
<path d="M474.3,236.8l2.6,-1.5h1.4v3h-1.4z" fill="none" stroke="#181818" stroke-width="0.5"/>
<text x="479.0" y="235.8" font-size="5.8" fill="#2c2418" text-anchor="start">6</text>
<text x="469.4" y="239.7" font-size="6.5" fill="#6a3a1e" text-anchor="end">TXD1</text>
<path d="M486.7,236.8L550.7,236.8" stroke="#3535ae" stroke-width="1"/>
<text x="493.0" y="236.0" font-size="6.5" fill="#8a1c2c" text-anchor="start" textLength="44.0" lengthAdjust="spacingAndGlyphs">PA3_USART2_RX</text>
<path d="M473.8,249.8L486.7,249.8" stroke="#505050" stroke-width="1"/>
<path d="M473.8,249.8H478.8" stroke="#3a3a3a" stroke-width="0.75"/>
<path d="M474.3,249.8l2.6,-1.5h1.4v3h-1.4z" fill="none" stroke="#181818" stroke-width="0.5"/>
<text x="479.0" y="248.8" font-size="5.8" fill="#2c2418" text-anchor="start">9</text>
<text x="469.4" y="252.7" font-size="6.5" fill="#6a3a1e" text-anchor="end">CTS1_DN</text>
<path d="M486.7,249.8L550.7,249.8" stroke="#3535ae" stroke-width="1"/>
<text x="493.0" y="249.0" font-size="6.5" fill="#8a1c2c" text-anchor="start" textLength="47.0" lengthAdjust="spacingAndGlyphs">PA1_USART2_RTS</text>
<path d="M473.8,256.1L486.7,256.1" stroke="#505050" stroke-width="1"/>
<path d="M473.8,256.1H478.8" stroke="#3a3a3a" stroke-width="0.75"/>
<path d="M474.3,256.1l2.6,-1.5h1.4v3h-1.4z" fill="none" stroke="#181818" stroke-width="0.5"/>
<text x="478.8" y="255.1" font-size="5.8" fill="#2c2418" text-anchor="start">10</text>
<text x="469.4" y="259.0" font-size="6.5" fill="#6a3a1e" text-anchor="end">RTS1_DP</text>
<path d="M486.7,256.1L550.7,256.1" stroke="#3535ae" stroke-width="1"/>
<text x="493.0" y="255.3" font-size="6.5" fill="#8a1c2c" text-anchor="start" textLength="47.0" lengthAdjust="spacingAndGlyphs">PA0_USART2_CTS</text>
<path d="M473.8,268.8L486.7,268.8" stroke="#505050" stroke-width="1"/>
<path d="M473.8,268.8H478.8" stroke="#3a3a3a" stroke-width="0.75"/>
<path d="M474.3,268.8l2.6,-1.5h1.4v3h-1.4z" fill="none" stroke="#181818" stroke-width="0.5"/>
<text x="479.0" y="267.8" font-size="5.8" fill="#2c2418" text-anchor="start">2</text>
<text x="469.4" y="271.7" font-size="6.5" fill="#6a3a1e" text-anchor="end">BOOT0</text>
<path d="M486.7,268.8L550.7,268.8" stroke="#3535ae" stroke-width="1"/>
<text x="493.0" y="268.0" font-size="6.5" fill="#8a1c2c" text-anchor="start" textLength="49.0" lengthAdjust="spacingAndGlyphs">PC15_SPW_BOOT0</text>
<path d="M473.8,281.5L486.7,281.5" stroke="#505050" stroke-width="1"/>
<path d="M473.8,281.5H478.8" stroke="#3a3a3a" stroke-width="0.75"/>
<path d="M474.3,281.5l2.6,-1.5h1.4v3h-1.4z" fill="none" stroke="#181818" stroke-width="0.5"/>
<text x="479.0" y="280.5" font-size="5.8" fill="#2c2418" text-anchor="start">3</text>
<text x="469.4" y="284.4" font-size="6.5" fill="#6a3a1e" text-anchor="end">RESETn</text>
<path d="M473.8,294.4L486.7,294.4" stroke="#505050" stroke-width="1"/>
<text x="478.8" y="293.4" font-size="5.8" fill="#2c2418" text-anchor="start">26</text>
<text x="469.4" y="297.3" font-size="6.5" fill="#40380f" text-anchor="end">NC</text>
<path d="M486.7,294.4L550.7,294.4" stroke="#3535ae" stroke-width="1"/>
<text x="493.0" y="293.6" font-size="6.5" fill="#8a1c2c" text-anchor="start" textLength="49.0" lengthAdjust="spacingAndGlyphs">PC13_SPW_SWDIO</text>
<path d="M473.8,300.8L486.7,300.8" stroke="#505050" stroke-width="1"/>
<text x="478.8" y="299.8" font-size="5.8" fill="#2c2418" text-anchor="start">27</text>
<text x="469.4" y="303.7" font-size="6.5" fill="#40380f" text-anchor="end">NC</text>
<path d="M473.8,307.2L486.7,307.2" stroke="#505050" stroke-width="1"/>
<text x="478.8" y="306.2" font-size="5.8" fill="#2c2418" text-anchor="start">28</text>
<text x="469.4" y="310.1" font-size="6.5" fill="#40380f" text-anchor="end">NC</text>
<path d="M473.8,313.6L486.7,313.6" stroke="#505050" stroke-width="1"/>
<text x="478.8" y="312.6" font-size="5.8" fill="#2c2418" text-anchor="start">29</text>
<text x="469.4" y="316.5" font-size="6.5" fill="#40380f" text-anchor="end">NC</text>
<path d="M486.7,313.6L550.7,313.6" stroke="#3535ae" stroke-width="1"/>
<text x="493.0" y="312.8" font-size="6.5" fill="#8a1c2c" text-anchor="start" textLength="50.0" lengthAdjust="spacingAndGlyphs">PC14_SPW_SWCLK</text>
<path d="M473.8,320.0L486.7,320.0" stroke="#505050" stroke-width="1"/>
<text x="478.8" y="319.0" font-size="5.8" fill="#2c2418" text-anchor="start">30</text>
<text x="469.4" y="322.9" font-size="6.5" fill="#40380f" text-anchor="end">NC</text>
<path d="M473.8,332.6L486.7,332.6" stroke="#505050" stroke-width="1"/>
<text x="478.8" y="331.6" font-size="5.8" fill="#2c2418" text-anchor="start">23</text>
<text x="469.4" y="335.5" font-size="6.5" fill="#40380f" text-anchor="end">GND</text>
<path d="M473.8,339.2L486.7,339.2" stroke="#505050" stroke-width="1"/>
<text x="478.8" y="338.2" font-size="5.8" fill="#2c2418" text-anchor="start">25</text>
<text x="469.4" y="342.1" font-size="6.5" fill="#40380f" text-anchor="end">GND</text>
<text x="414.4" y="342.0" font-size="6.5" fill="#40380f" text-anchor="start" textLength="11.6" lengthAdjust="spacingAndGlyphs">3.3 V</text>
<path d="M486.7,281.5L569.0,281.5" stroke="#3535ae" stroke-width="1"/>
<path d="M569.0,281.5L576.5,281.5" stroke="#505050" stroke-width="1"/>
<path d="M588.4,281.5L595.5,281.5" stroke="#505050" stroke-width="1"/>
<path d="M595.5,281.5L647.0,281.5" stroke="#3535ae" stroke-width="1"/>
<path d="M576.5,281.5L577.0,282.6L578.0,280.4L579.0,282.6L580.0,280.4L581.0,282.6L582.0,280.4L582.9,282.6L583.9,280.4L584.9,282.6L585.9,280.4L586.9,282.6L587.9,280.4L588.4,281.5" stroke="#3c3cf0" stroke-width="0.7" fill="none"/>
<text x="575.8" y="279.0" font-size="6.5" fill="#1a1a8c" text-anchor="start" textLength="9.2" lengthAdjust="spacingAndGlyphs">R15</text>
<text x="582.8" y="287.4" font-size="6.5" fill="#1a1a8c" text-anchor="start" textLength="24.2" lengthAdjust="spacingAndGlyphs">4.7 KOhm</text>
<text x="601.8" y="281.0" font-size="6.5" fill="#8a1c2c" text-anchor="start" textLength="41.8" lengthAdjust="spacingAndGlyphs">PC2_WF_RESET</text>
<path d="M563.2,281.5L563.2,288.0" stroke="#3535ae" stroke-width="1"/>
<path d="M563.2,288.0L563.2,296.5" stroke="#505050" stroke-width="1"/>
<path d="M563.2,298.7L563.2,307.5" stroke="#505050" stroke-width="1"/>
<path d="M563.2,307.5L563.2,320.4" stroke="#3535ae" stroke-width="1"/>
<path d="M557.6,296.5L568.8,296.5" stroke="#3030e8" stroke-width="1"/>
<path d="M557.6,298.7L568.8,298.7" stroke="#3030e8" stroke-width="1"/>
<text x="569.2" y="299.7" font-size="6.5" fill="#1a1a8c" text-anchor="start" textLength="9.4" lengthAdjust="spacingAndGlyphs">C39</text>
<text x="569.5" y="306.1" font-size="6.5" fill="#1a1a8c" text-anchor="start" textLength="15.7" lengthAdjust="spacingAndGlyphs">100 nF</text>
<path d="M563.2,320.4L563.2,326.2" stroke="#a84a4a" stroke-width="1"/>
<path d="M556.2,326.2L570.2,326.2" stroke="#b05858" stroke-width="1.2"/>
<path d="M558.0,328.1L568.4,328.1" stroke="#b05858" stroke-width="1.2"/>
<path d="M560.0,329.9L566.4,329.9" stroke="#b05858" stroke-width="1.2"/>
<path d="M561.9,331.8L564.5,331.8" stroke="#b05858" stroke-width="1.2"/>
<text x="563.2" y="338.8" font-size="6.5" fill="#8a1c2c" text-anchor="middle" textLength="13.0" lengthAdjust="spacingAndGlyphs">GND</text>
<path d="M486.7,332.6L505.4,332.6L505.4,339.2L486.7,339.2" stroke="#3535ae" stroke-width="1" fill="none"/>
<path d="M505.4,339.2L505.4,345.0" stroke="#a84a4a" stroke-width="1"/>
<path d="M498.4,345.0L512.4,345.0" stroke="#b05858" stroke-width="1.2"/>
<path d="M500.2,346.9L510.6,346.9" stroke="#b05858" stroke-width="1.2"/>
<path d="M502.2,348.7L508.6,348.7" stroke="#b05858" stroke-width="1.2"/>
<path d="M504.1,350.6L506.7,350.6" stroke="#b05858" stroke-width="1.2"/>
<text x="505.4" y="357.6" font-size="6.5" fill="#8a1c2c" text-anchor="middle" textLength="13.0" lengthAdjust="spacingAndGlyphs">GND</text>
<path d="M352.0,339.2L352.0,332.9" stroke="#a84a4a" stroke-width="1"/>
<path d="M348.3,332.9L355.7,332.9" stroke="#a84a4a" stroke-width="1"/>
<text x="352.0" y="332.3" font-size="6.5" fill="#8a1c2c" text-anchor="middle" textLength="9.0" lengthAdjust="spacingAndGlyphs">3V3</text>
<path d="M352.0,339.2L396.3,339.2" stroke="#3535ae" stroke-width="1"/>
<path d="M396.3,339.2L409.5,339.2" stroke="#505050" stroke-width="1"/>
<text x="405.6" y="338.1" font-size="5.8" fill="#2c2418" text-anchor="end">24</text>
<path d="M358.4,339.2L358.4,352.1" stroke="#3535ae" stroke-width="1"/>
<path d="M358.4,352.1L358.4,360.6" stroke="#505050" stroke-width="1"/>
<path d="M358.4,362.8L358.4,371.6" stroke="#505050" stroke-width="1"/>
<path d="M358.4,371.6L358.4,377.5" stroke="#3535ae" stroke-width="1"/>
<path d="M352.8,360.6L364.0,360.6" stroke="#3030e8" stroke-width="1"/>
<path d="M352.8,362.8L364.0,362.8" stroke="#3030e8" stroke-width="1"/>
<text x="364.4" y="363.8" font-size="6.5" fill="#1a1a8c" text-anchor="start" textLength="9.4" lengthAdjust="spacingAndGlyphs">C37</text>
<text x="364.7" y="370.2" font-size="6.5" fill="#1a1a8c" text-anchor="start" textLength="15.0" lengthAdjust="spacingAndGlyphs">100 nF</text>
<path d="M358.4,377.5L358.4,383.2" stroke="#a84a4a" stroke-width="1"/>
<path d="M351.4,383.2L365.4,383.2" stroke="#b05858" stroke-width="1.2"/>
<path d="M353.2,385.1L363.6,385.1" stroke="#b05858" stroke-width="1.2"/>
<path d="M355.2,386.9L361.6,386.9" stroke="#b05858" stroke-width="1.2"/>
<path d="M357.1,388.8L359.7,388.8" stroke="#b05858" stroke-width="1.2"/>
<text x="358.4" y="395.8" font-size="6.5" fill="#8a1c2c" text-anchor="middle" textLength="13.0" lengthAdjust="spacingAndGlyphs">GND</text>
<path d="M390.4,339.2L390.4,352.1" stroke="#3535ae" stroke-width="1"/>
<path d="M390.4,352.1L390.4,360.6" stroke="#505050" stroke-width="1"/>
<path d="M390.4,362.8L390.4,371.6" stroke="#505050" stroke-width="1"/>
<path d="M390.4,371.6L390.4,377.5" stroke="#3535ae" stroke-width="1"/>
<path d="M384.8,360.6L396.0,360.6" stroke="#3030e8" stroke-width="1"/>
<path d="M384.8,362.8L396.0,362.8" stroke="#3030e8" stroke-width="1"/>
<text x="396.4" y="363.8" font-size="6.5" fill="#1a1a8c" text-anchor="start" textLength="9.4" lengthAdjust="spacingAndGlyphs">C38</text>
<text x="396.7" y="370.2" font-size="6.5" fill="#1a1a8c" text-anchor="start" textLength="13.0" lengthAdjust="spacingAndGlyphs">10 uF</text>
<path d="M390.4,377.5L390.4,383.2" stroke="#a84a4a" stroke-width="1"/>
<path d="M383.4,383.2L397.4,383.2" stroke="#b05858" stroke-width="1.2"/>
<path d="M385.2,385.1L395.6,385.1" stroke="#b05858" stroke-width="1.2"/>
<path d="M387.2,386.9L393.6,386.9" stroke="#b05858" stroke-width="1.2"/>
<path d="M389.1,388.8L391.7,388.8" stroke="#b05858" stroke-width="1.2"/>
<text x="390.4" y="395.8" font-size="6.5" fill="#8a1c2c" text-anchor="middle" textLength="13.0" lengthAdjust="spacingAndGlyphs">GND</text>
<rect x="735.9" y="179" width="40" height="230.4" fill="#ffffb2" stroke="#b06a5a" stroke-width="1"/>
<text x="735.8" y="178.0" font-size="5.5" fill="#1a1a8c" text-anchor="start">U2</text>
<text x="735.6" y="415.4" font-size="6.5" fill="#1a1a8c" text-anchor="start" textLength="20.0" lengthAdjust="spacingAndGlyphs">STM32F</text>
<path d="M723.2,185.4L735.9,185.4" stroke="#505050" stroke-width="1"/>
<path d="M727.5,185.4H735.9" stroke="#3a3a3a" stroke-width="0.75"/>
<path d="M728.9,185.4l3,-1.4v2.8zM735.5,185.4l-3,-1.4v2.8z" fill="none" stroke="#181818" stroke-width="0.5"/>
<text x="731.0" y="184.4" font-size="5.8" fill="#2c2418" text-anchor="end">14</text>
<text x="741.0" y="188.3" font-size="6.5" fill="#40380f" text-anchor="start" textLength="10.0" lengthAdjust="spacingAndGlyphs">PA0</text>
<path d="M723.2,191.8L735.9,191.8" stroke="#505050" stroke-width="1"/>
<path d="M727.5,191.8H735.9" stroke="#3a3a3a" stroke-width="0.75"/>
<path d="M728.9,191.8l3,-1.4v2.8zM735.5,191.8l-3,-1.4v2.8z" fill="none" stroke="#181818" stroke-width="0.5"/>
<text x="731.0" y="190.8" font-size="5.8" fill="#2c2418" text-anchor="end">15</text>
<text x="741.0" y="194.7" font-size="6.5" fill="#40380f" text-anchor="start" textLength="10.0" lengthAdjust="spacingAndGlyphs">PA1</text>
<path d="M723.2,198.2L735.9,198.2" stroke="#505050" stroke-width="1"/>
<path d="M727.5,198.2H735.9" stroke="#3a3a3a" stroke-width="0.75"/>
<path d="M728.9,198.2l3,-1.4v2.8zM735.5,198.2l-3,-1.4v2.8z" fill="none" stroke="#181818" stroke-width="0.5"/>
<text x="731.0" y="197.2" font-size="5.8" fill="#2c2418" text-anchor="end">16</text>
<text x="741.0" y="201.1" font-size="6.5" fill="#40380f" text-anchor="start" textLength="10.0" lengthAdjust="spacingAndGlyphs">PA2</text>
<path d="M723.2,204.6L735.9,204.6" stroke="#505050" stroke-width="1"/>
<path d="M727.5,204.6H735.9" stroke="#3a3a3a" stroke-width="0.75"/>
<path d="M728.9,204.6l3,-1.4v2.8zM735.5,204.6l-3,-1.4v2.8z" fill="none" stroke="#181818" stroke-width="0.5"/>
<text x="731.0" y="203.6" font-size="5.8" fill="#2c2418" text-anchor="end">17</text>
<text x="741.0" y="207.5" font-size="6.5" fill="#40380f" text-anchor="start" textLength="10.0" lengthAdjust="spacingAndGlyphs">PA3</text>
<path d="M723.2,211.0L735.9,211.0" stroke="#505050" stroke-width="1"/>
<path d="M727.5,211.0H735.9" stroke="#3a3a3a" stroke-width="0.75"/>
<path d="M728.9,211.0l3,-1.4v2.8zM735.5,211.0l-3,-1.4v2.8z" fill="none" stroke="#181818" stroke-width="0.5"/>
<text x="731.0" y="210.0" font-size="5.8" fill="#2c2418" text-anchor="end">20</text>
<text x="741.0" y="213.9" font-size="6.5" fill="#40380f" text-anchor="start" textLength="10.0" lengthAdjust="spacingAndGlyphs">PA4</text>
<path d="M723.2,217.4L735.9,217.4" stroke="#505050" stroke-width="1"/>
<path d="M727.5,217.4H735.9" stroke="#3a3a3a" stroke-width="0.75"/>
<path d="M728.9,217.4l3,-1.4v2.8zM735.5,217.4l-3,-1.4v2.8z" fill="none" stroke="#181818" stroke-width="0.5"/>
<text x="731.0" y="216.4" font-size="5.8" fill="#2c2418" text-anchor="end">21</text>
<text x="741.0" y="220.3" font-size="6.5" fill="#40380f" text-anchor="start" textLength="10.0" lengthAdjust="spacingAndGlyphs">PA5</text>
<path d="M723.2,223.8L735.9,223.8" stroke="#505050" stroke-width="1"/>
<path d="M727.5,223.8H735.9" stroke="#3a3a3a" stroke-width="0.75"/>
<path d="M728.9,223.8l3,-1.4v2.8zM735.5,223.8l-3,-1.4v2.8z" fill="none" stroke="#181818" stroke-width="0.5"/>
<text x="731.0" y="222.8" font-size="5.8" fill="#2c2418" text-anchor="end">22</text>
<text x="741.0" y="226.7" font-size="6.5" fill="#40380f" text-anchor="start" textLength="10.0" lengthAdjust="spacingAndGlyphs">PA6</text>
<path d="M723.2,230.2L735.9,230.2" stroke="#505050" stroke-width="1"/>
<path d="M727.5,230.2H735.9" stroke="#3a3a3a" stroke-width="0.75"/>
<path d="M728.9,230.2l3,-1.4v2.8zM735.5,230.2l-3,-1.4v2.8z" fill="none" stroke="#181818" stroke-width="0.5"/>
<text x="731.0" y="229.2" font-size="5.8" fill="#2c2418" text-anchor="end">23</text>
<text x="741.0" y="233.1" font-size="6.5" fill="#40380f" text-anchor="start" textLength="10.0" lengthAdjust="spacingAndGlyphs">PA7</text>
<path d="M723.2,243.0L735.9,243.0" stroke="#505050" stroke-width="1"/>
<path d="M727.5,243.0H735.9" stroke="#3a3a3a" stroke-width="0.75"/>
<path d="M728.9,243.0l3,-1.4v2.8zM735.5,243.0l-3,-1.4v2.8z" fill="none" stroke="#181818" stroke-width="0.5"/>
<text x="731.0" y="242.0" font-size="5.8" fill="#2c2418" text-anchor="end">41</text>
<text x="741.0" y="245.9" font-size="6.5" fill="#40380f" text-anchor="start" textLength="10.0" lengthAdjust="spacingAndGlyphs">PA8</text>
<path d="M723.2,249.4L735.9,249.4" stroke="#505050" stroke-width="1"/>
<path d="M727.5,249.4H735.9" stroke="#3a3a3a" stroke-width="0.75"/>
<path d="M728.9,249.4l3,-1.4v2.8zM735.5,249.4l-3,-1.4v2.8z" fill="none" stroke="#181818" stroke-width="0.5"/>
<text x="731.0" y="248.4" font-size="5.8" fill="#2c2418" text-anchor="end">42</text>
<text x="741.0" y="252.3" font-size="6.5" fill="#40380f" text-anchor="start" textLength="10.0" lengthAdjust="spacingAndGlyphs">PA9</text>
<path d="M723.2,255.8L735.9,255.8" stroke="#505050" stroke-width="1"/>
<path d="M727.5,255.8H735.9" stroke="#3a3a3a" stroke-width="0.75"/>
<path d="M728.9,255.8l3,-1.4v2.8zM735.5,255.8l-3,-1.4v2.8z" fill="none" stroke="#181818" stroke-width="0.5"/>
<text x="731.0" y="254.8" font-size="5.8" fill="#2c2418" text-anchor="end">43</text>
<text x="741.0" y="258.7" font-size="6.5" fill="#40380f" text-anchor="start" textLength="13.2" lengthAdjust="spacingAndGlyphs">PA10</text>
<path d="M723.2,262.2L735.9,262.2" stroke="#505050" stroke-width="1"/>
<path d="M727.5,262.2H735.9" stroke="#3a3a3a" stroke-width="0.75"/>
<path d="M728.9,262.2l3,-1.4v2.8zM735.5,262.2l-3,-1.4v2.8z" fill="none" stroke="#181818" stroke-width="0.5"/>
<text x="731.0" y="261.2" font-size="5.8" fill="#2c2418" text-anchor="end">44</text>
<text x="741.0" y="265.1" font-size="6.5" fill="#40380f" text-anchor="start" textLength="13.2" lengthAdjust="spacingAndGlyphs">PA11</text>
<path d="M723.2,268.6L735.9,268.6" stroke="#505050" stroke-width="1"/>
<path d="M727.5,268.6H735.9" stroke="#3a3a3a" stroke-width="0.75"/>
<path d="M728.9,268.6l3,-1.4v2.8zM735.5,268.6l-3,-1.4v2.8z" fill="none" stroke="#181818" stroke-width="0.5"/>
<text x="731.0" y="267.6" font-size="5.8" fill="#2c2418" text-anchor="end">45</text>
<text x="741.0" y="271.5" font-size="6.5" fill="#40380f" text-anchor="start" textLength="13.2" lengthAdjust="spacingAndGlyphs">PA12</text>
<path d="M723.2,275.0L735.9,275.0" stroke="#505050" stroke-width="1"/>
<path d="M727.5,275.0H735.9" stroke="#3a3a3a" stroke-width="0.75"/>
<path d="M728.9,275.0l3,-1.4v2.8zM735.5,275.0l-3,-1.4v2.8z" fill="none" stroke="#181818" stroke-width="0.5"/>
<text x="731.0" y="274.0" font-size="5.8" fill="#2c2418" text-anchor="end">46</text>
<text x="741.0" y="277.9" font-size="6.5" fill="#40380f" text-anchor="start" textLength="13.2" lengthAdjust="spacingAndGlyphs">PA13</text>
<path d="M723.2,281.4L735.9,281.4" stroke="#505050" stroke-width="1"/>
<path d="M727.5,281.4H735.9" stroke="#3a3a3a" stroke-width="0.75"/>
<path d="M728.9,281.4l3,-1.4v2.8zM735.5,281.4l-3,-1.4v2.8z" fill="none" stroke="#181818" stroke-width="0.5"/>
<text x="731.0" y="280.4" font-size="5.8" fill="#2c2418" text-anchor="end">49</text>
<text x="741.0" y="284.3" font-size="6.5" fill="#40380f" text-anchor="start" textLength="13.2" lengthAdjust="spacingAndGlyphs">PA14</text>
<path d="M723.2,287.8L735.9,287.8" stroke="#505050" stroke-width="1"/>
<path d="M727.5,287.8H735.9" stroke="#3a3a3a" stroke-width="0.75"/>
<path d="M728.9,287.8l3,-1.4v2.8zM735.5,287.8l-3,-1.4v2.8z" fill="none" stroke="#181818" stroke-width="0.5"/>
<text x="731.0" y="286.8" font-size="5.8" fill="#2c2418" text-anchor="end">50</text>
<text x="741.0" y="290.7" font-size="6.5" fill="#40380f" text-anchor="start" textLength="13.2" lengthAdjust="spacingAndGlyphs">PA15</text>
<path d="M723.2,300.6L735.9,300.6" stroke="#505050" stroke-width="1"/>
<path d="M727.5,300.6H735.9" stroke="#3a3a3a" stroke-width="0.75"/>
<path d="M728.9,300.6l3,-1.4v2.8zM735.5,300.6l-3,-1.4v2.8z" fill="none" stroke="#181818" stroke-width="0.5"/>
<text x="731.0" y="299.6" font-size="5.8" fill="#2c2418" text-anchor="end">8</text>
<text x="741.0" y="303.5" font-size="6.5" fill="#40380f" text-anchor="start" textLength="10.0" lengthAdjust="spacingAndGlyphs">PC0</text>
<path d="M723.2,307.0L735.9,307.0" stroke="#505050" stroke-width="1"/>
<path d="M727.5,307.0H735.9" stroke="#3a3a3a" stroke-width="0.75"/>
<path d="M728.9,307.0l3,-1.4v2.8zM735.5,307.0l-3,-1.4v2.8z" fill="none" stroke="#181818" stroke-width="0.5"/>
<text x="731.0" y="306.0" font-size="5.8" fill="#2c2418" text-anchor="end">9</text>
<text x="741.0" y="309.9" font-size="6.5" fill="#40380f" text-anchor="start" textLength="10.0" lengthAdjust="spacingAndGlyphs">PC1</text>
<path d="M723.2,313.4L735.9,313.4" stroke="#505050" stroke-width="1"/>
<path d="M727.5,313.4H735.9" stroke="#3a3a3a" stroke-width="0.75"/>
<path d="M728.9,313.4l3,-1.4v2.8zM735.5,313.4l-3,-1.4v2.8z" fill="none" stroke="#181818" stroke-width="0.5"/>
<text x="731.0" y="312.4" font-size="5.8" fill="#2c2418" text-anchor="end">10</text>
<text x="741.0" y="316.3" font-size="6.5" fill="#40380f" text-anchor="start" textLength="10.0" lengthAdjust="spacingAndGlyphs">PC2</text>
<path d="M723.2,319.8L735.9,319.8" stroke="#505050" stroke-width="1"/>
<path d="M727.5,319.8H735.9" stroke="#3a3a3a" stroke-width="0.75"/>
<path d="M728.9,319.8l3,-1.4v2.8zM735.5,319.8l-3,-1.4v2.8z" fill="none" stroke="#181818" stroke-width="0.5"/>
<text x="731.0" y="318.8" font-size="5.8" fill="#2c2418" text-anchor="end">11</text>
<text x="741.0" y="322.7" font-size="6.5" fill="#40380f" text-anchor="start" textLength="10.0" lengthAdjust="spacingAndGlyphs">PC3</text>
<path d="M723.2,326.2L735.9,326.2" stroke="#505050" stroke-width="1"/>
<path d="M727.5,326.2H735.9" stroke="#3a3a3a" stroke-width="0.75"/>
<path d="M728.9,326.2l3,-1.4v2.8zM735.5,326.2l-3,-1.4v2.8z" fill="none" stroke="#181818" stroke-width="0.5"/>
<text x="731.0" y="325.2" font-size="5.8" fill="#2c2418" text-anchor="end">24</text>
<text x="741.0" y="329.1" font-size="6.5" fill="#40380f" text-anchor="start" textLength="10.0" lengthAdjust="spacingAndGlyphs">PC4</text>
<path d="M723.2,332.6L735.9,332.6" stroke="#505050" stroke-width="1"/>
<path d="M727.5,332.6H735.9" stroke="#3a3a3a" stroke-width="0.75"/>
<path d="M728.9,332.6l3,-1.4v2.8zM735.5,332.6l-3,-1.4v2.8z" fill="none" stroke="#181818" stroke-width="0.5"/>
<text x="731.0" y="331.6" font-size="5.8" fill="#2c2418" text-anchor="end">25</text>
<text x="741.0" y="335.5" font-size="6.5" fill="#40380f" text-anchor="start" textLength="10.0" lengthAdjust="spacingAndGlyphs">PC5</text>
<path d="M723.2,339.0L735.9,339.0" stroke="#505050" stroke-width="1"/>
<path d="M727.5,339.0H735.9" stroke="#3a3a3a" stroke-width="0.75"/>
<path d="M728.9,339.0l3,-1.4v2.8zM735.5,339.0l-3,-1.4v2.8z" fill="none" stroke="#181818" stroke-width="0.5"/>
<text x="731.0" y="338.0" font-size="5.8" fill="#2c2418" text-anchor="end">37</text>
<text x="741.0" y="341.9" font-size="6.5" fill="#40380f" text-anchor="start" textLength="10.0" lengthAdjust="spacingAndGlyphs">PC6</text>
<path d="M723.2,345.4L735.9,345.4" stroke="#505050" stroke-width="1"/>
<path d="M727.5,345.4H735.9" stroke="#3a3a3a" stroke-width="0.75"/>
<path d="M728.9,345.4l3,-1.4v2.8zM735.5,345.4l-3,-1.4v2.8z" fill="none" stroke="#181818" stroke-width="0.5"/>
<text x="731.0" y="344.4" font-size="5.8" fill="#2c2418" text-anchor="end">38</text>
<text x="741.0" y="348.3" font-size="6.5" fill="#40380f" text-anchor="start" textLength="10.0" lengthAdjust="spacingAndGlyphs">PC7</text>
<path d="M723.2,358.2L735.9,358.2" stroke="#505050" stroke-width="1"/>
<path d="M727.5,358.2H735.9" stroke="#3a3a3a" stroke-width="0.75"/>
<path d="M728.9,358.2l3,-1.4v2.8zM735.5,358.2l-3,-1.4v2.8z" fill="none" stroke="#181818" stroke-width="0.5"/>
<text x="731.0" y="357.2" font-size="5.8" fill="#2c2418" text-anchor="end">39</text>
<text x="741.0" y="361.1" font-size="6.5" fill="#40380f" text-anchor="start" textLength="10.0" lengthAdjust="spacingAndGlyphs">PC8</text>
<path d="M723.2,364.6L735.9,364.6" stroke="#505050" stroke-width="1"/>
<path d="M727.5,364.6H735.9" stroke="#3a3a3a" stroke-width="0.75"/>
<path d="M728.9,364.6l3,-1.4v2.8zM735.5,364.6l-3,-1.4v2.8z" fill="none" stroke="#181818" stroke-width="0.5"/>
<text x="731.0" y="363.6" font-size="5.8" fill="#2c2418" text-anchor="end">40</text>
<text x="741.0" y="367.5" font-size="6.5" fill="#40380f" text-anchor="start" textLength="10.0" lengthAdjust="spacingAndGlyphs">PC9</text>
<path d="M723.2,371.0L735.9,371.0" stroke="#505050" stroke-width="1"/>
<path d="M727.5,371.0H735.9" stroke="#3a3a3a" stroke-width="0.75"/>
<path d="M728.9,371.0l3,-1.4v2.8zM735.5,371.0l-3,-1.4v2.8z" fill="none" stroke="#181818" stroke-width="0.5"/>
<text x="731.0" y="370.0" font-size="5.8" fill="#2c2418" text-anchor="end">51</text>
<text x="741.0" y="373.9" font-size="6.5" fill="#40380f" text-anchor="start" textLength="13.2" lengthAdjust="spacingAndGlyphs">PC10</text>
<path d="M723.2,377.4L735.9,377.4" stroke="#505050" stroke-width="1"/>
<path d="M727.5,377.4H735.9" stroke="#3a3a3a" stroke-width="0.75"/>
<path d="M728.9,377.4l3,-1.4v2.8zM735.5,377.4l-3,-1.4v2.8z" fill="none" stroke="#181818" stroke-width="0.5"/>
<text x="731.0" y="376.4" font-size="5.8" fill="#2c2418" text-anchor="end">52</text>
<text x="741.0" y="380.3" font-size="6.5" fill="#40380f" text-anchor="start" textLength="13.2" lengthAdjust="spacingAndGlyphs">PC11</text>
<path d="M723.2,383.8L735.9,383.8" stroke="#505050" stroke-width="1"/>
<path d="M727.5,383.8H735.9" stroke="#3a3a3a" stroke-width="0.75"/>
<path d="M728.9,383.8l3,-1.4v2.8zM735.5,383.8l-3,-1.4v2.8z" fill="none" stroke="#181818" stroke-width="0.5"/>
<text x="731.0" y="382.8" font-size="5.8" fill="#2c2418" text-anchor="end">53</text>
<text x="741.0" y="386.7" font-size="6.5" fill="#40380f" text-anchor="start" textLength="13.2" lengthAdjust="spacingAndGlyphs">PC12</text>
<path d="M723.2,390.2L735.9,390.2" stroke="#505050" stroke-width="1"/>
<path d="M727.5,390.2H735.9" stroke="#3a3a3a" stroke-width="0.75"/>
<path d="M728.9,390.2l3,-1.4v2.8zM735.5,390.2l-3,-1.4v2.8z" fill="none" stroke="#181818" stroke-width="0.5"/>
<text x="731.0" y="389.2" font-size="5.8" fill="#2c2418" text-anchor="end">2</text>
<text x="741.0" y="393.1" font-size="6.5" fill="#40380f" text-anchor="start" textLength="13.2" lengthAdjust="spacingAndGlyphs">PC13</text>
<path d="M723.2,396.6L735.9,396.6" stroke="#505050" stroke-width="1"/>
<path d="M727.5,396.6H735.9" stroke="#3a3a3a" stroke-width="0.75"/>
<path d="M728.9,396.6l3,-1.4v2.8zM735.5,396.6l-3,-1.4v2.8z" fill="none" stroke="#181818" stroke-width="0.5"/>
<text x="731.0" y="395.6" font-size="5.8" fill="#2c2418" text-anchor="end">3</text>
<text x="741.0" y="399.5" font-size="6.5" fill="#40380f" text-anchor="start" textLength="13.2" lengthAdjust="spacingAndGlyphs">PC14</text>
<path d="M723.2,403.0L735.9,403.0" stroke="#505050" stroke-width="1"/>
<path d="M727.5,403.0H735.9" stroke="#3a3a3a" stroke-width="0.75"/>
<path d="M728.9,403.0l3,-1.4v2.8zM735.5,403.0l-3,-1.4v2.8z" fill="none" stroke="#181818" stroke-width="0.5"/>
<text x="731.0" y="402.0" font-size="5.8" fill="#2c2418" text-anchor="end">4</text>
<text x="741.0" y="405.9" font-size="6.5" fill="#40380f" text-anchor="start" textLength="13.2" lengthAdjust="spacingAndGlyphs">PC15</text>
<path d="M659.0,185.4L723.2,185.4" stroke="#3535ae" stroke-width="1"/>
<text x="665.7" y="184.6" font-size="6.5" fill="#8a1c2c" text-anchor="start" textLength="47.2" lengthAdjust="spacingAndGlyphs">PA0_USART2_CTS</text>
<path d="M659.0,191.8L723.2,191.8" stroke="#3535ae" stroke-width="1"/>
<text x="665.7" y="191.0" font-size="6.5" fill="#8a1c2c" text-anchor="start" textLength="47.2" lengthAdjust="spacingAndGlyphs">PA1_USART2_RTS</text>
<path d="M659.0,198.2L723.2,198.2" stroke="#3535ae" stroke-width="1"/>
<text x="665.7" y="197.4" font-size="6.5" fill="#8a1c2c" text-anchor="start" textLength="44.4" lengthAdjust="spacingAndGlyphs">PA2_USART2_TX</text>
<path d="M659.0,204.6L723.2,204.6" stroke="#3535ae" stroke-width="1"/>
<text x="665.7" y="203.8" font-size="6.5" fill="#8a1c2c" text-anchor="start" textLength="44.4" lengthAdjust="spacingAndGlyphs">PA3_USART2_RX</text>
<path d="M659.0,211.0L723.2,211.0" stroke="#3535ae" stroke-width="1"/>
<text x="665.7" y="210.2" font-size="6.5" fill="#8a1c2c" text-anchor="start" textLength="43.6" lengthAdjust="spacingAndGlyphs">PA4_GPIO6_WIFI</text>
<path d="M652.4,262.2L723.2,262.2" stroke="#3535ae" stroke-width="1"/>
<text x="678.8" y="262.1" font-size="6.5" fill="#8a1c2c" text-anchor="start" textLength="39.8" lengthAdjust="spacingAndGlyphs">PA12_USB_D_N</text>
<path d="M659.0,262.5L662.1,258.4" stroke="#ee3030" stroke-width="1.2" fill="none"/>
<path d="M662.0,257.5H673.6M662.0,259.0H673.6" stroke="#f04040" stroke-width="0.9" fill="none"/>
<ellipse cx="667.7" cy="258.3" rx="2.7" ry="2.2" stroke="#ee2a2a" stroke-width="1.1" fill="#e6e6e6"/>
<path d="M652.4,268.6L723.2,268.6" stroke="#3535ae" stroke-width="1"/>
<text x="678.8" y="268.5" font-size="6.5" fill="#8a1c2c" text-anchor="start" textLength="39.8" lengthAdjust="spacingAndGlyphs">PA12_USB_D_P</text>
<path d="M659.0,268.9L662.1,264.8" stroke="#ee3030" stroke-width="1.2" fill="none"/>
<path d="M662.0,263.9H673.6M662.0,265.4H673.6" stroke="#f04040" stroke-width="0.9" fill="none"/>
<ellipse cx="667.7" cy="264.7" rx="2.7" ry="2.2" stroke="#ee2a2a" stroke-width="1.1" fill="#e6e6e6"/>
<path d="M659.0,313.4L723.2,313.4" stroke="#3535ae" stroke-width="1"/>
<text x="671.9" y="313.2" font-size="6.5" fill="#8a1c2c" text-anchor="start" textLength="41.8" lengthAdjust="spacingAndGlyphs">PC2_WF_RESET</text>
<path d="M659.0,390.2L723.2,390.2" stroke="#3535ae" stroke-width="1"/>
<text x="665.8" y="390.1" font-size="6.5" fill="#8a1c2c" text-anchor="start" textLength="49.5" lengthAdjust="spacingAndGlyphs">PC13_SPW_SWDIO</text>
<path d="M659.0,396.6L723.2,396.6" stroke="#3535ae" stroke-width="1"/>
<text x="665.8" y="396.5" font-size="6.5" fill="#8a1c2c" text-anchor="start" textLength="50.0" lengthAdjust="spacingAndGlyphs">PC14_SPW_SWCLK</text>
<path d="M659.0,403.0L723.2,403.0" stroke="#3535ae" stroke-width="1"/>
<text x="665.8" y="402.9" font-size="6.5" fill="#8a1c2c" text-anchor="start" textLength="49.5" lengthAdjust="spacingAndGlyphs">PC15_SPW_BOOT0</text>
<path d="M633.6,364.6L626.9,364.6L626.9,371.2" stroke="#3535ae" stroke-width="1" fill="none"/>
<path d="M626.9,371.0L626.9,377.0" stroke="#a84a4a" stroke-width="1"/>
<path d="M619.9,377.0L633.9,377.0" stroke="#b05858" stroke-width="1.2"/>
<path d="M621.7,378.8L632.1,378.8" stroke="#b05858" stroke-width="1.2"/>
<path d="M623.7,380.7L630.1,380.7" stroke="#b05858" stroke-width="1.2"/>
<path d="M625.6,382.5L628.2,382.5" stroke="#b05858" stroke-width="1.2"/>
<text x="626.9" y="389.6" font-size="6.5" fill="#8a1c2c" text-anchor="middle" textLength="13.0" lengthAdjust="spacingAndGlyphs">GND</text>
<path d="M633.6,364.6L646.6,364.6" stroke="#505050" stroke-width="1"/>
<path d="M653.2,364.6L666.1,364.6" stroke="#505050" stroke-width="1"/>
<path d="M646.9,364.6L653.4,358.2L653.4,371.0Z" fill="#0ac20a" stroke="#0a6a0a" stroke-width="0.6"/>
<path d="M646.6,357.8L646.6,371.4" stroke="#6a6a6a" stroke-width="1.1"/>
<path d="M640.4,355.1l3.5,3.2" stroke="#111" stroke-width="0.8"/>
<path d="M638.8,353.5l3.2,1.2l-2,2z" fill="#000" stroke="#000" stroke-width="0.5" stroke-linejoin="round"/>
<path d="M643.0,352.4l3.5,3.2" stroke="#111" stroke-width="0.8"/>
<path d="M641.4,350.8l3.2,1.2l-2,2z" fill="#000" stroke="#000" stroke-width="0.5" stroke-linejoin="round"/>
<text x="638.6" y="350.2" font-size="6.5" fill="#1a1a8c" text-anchor="start" textLength="9.8" lengthAdjust="spacingAndGlyphs">DS4</text>
<path d="M666.0,364.6L723.2,364.6" stroke="#3535ae" stroke-width="1"/>
<path d="M687.2,364.6L687.6,365.7L688.4,363.5L689.2,365.7L690.1,363.5L690.9,365.7L691.7,363.5L692.5,365.7L693.3,363.5L694.1,365.7L695.0,363.5L695.8,365.7L696.6,363.5L697.0,364.6" stroke="#3c3cf0" stroke-width="0.7" fill="none"/>
<text x="678.8" y="364.2" font-size="6.5" fill="#1a1a8c" text-anchor="start" textLength="8.4" lengthAdjust="spacingAndGlyphs">R31</text>
<text x="697.6" y="364.2" font-size="6.5" fill="#1a1a8c" text-anchor="start" textLength="20.2" lengthAdjust="spacingAndGlyphs">1 KOhm</text>
<rect x="735.9" y="441.7" width="40" height="57.4" fill="#ffffb2" stroke="#b06a5a" stroke-width="1"/>
<text x="735.8" y="440.8" font-size="5.5" fill="#1a1a8c" text-anchor="start">U2</text>
<text x="735.6" y="505.4" font-size="6.5" fill="#1a1a8c" text-anchor="start" textLength="20.0" lengthAdjust="spacingAndGlyphs">STM32F</text>
<path d="M723.2,448.0L735.9,448.0" stroke="#505050" stroke-width="1"/>
<text x="731.6" y="447.0" font-size="5.8" fill="#2c2418" text-anchor="end">1</text>
<text x="741.0" y="450.9" font-size="6.5" fill="#40380f" text-anchor="start">VBA</text>
<path d="M723.2,460.8L735.9,460.8" stroke="#505050" stroke-width="1"/>
<text x="731.6" y="459.8" font-size="5.8" fill="#2c2418" text-anchor="end">32</text>
<text x="741.0" y="463.7" font-size="6.5" fill="#40380f" text-anchor="start">VDD</text>
<path d="M710.4,460.8L723.2,460.8" stroke="#3535ae" stroke-width="1"/>
<path d="M723.2,467.2L735.9,467.2" stroke="#505050" stroke-width="1"/>
<text x="731.6" y="466.2" font-size="5.8" fill="#2c2418" text-anchor="end">48</text>
<text x="741.0" y="470.1" font-size="6.5" fill="#40380f" text-anchor="start">VDD</text>
<path d="M710.4,467.2L723.2,467.2" stroke="#3535ae" stroke-width="1"/>
<path d="M723.2,473.6L735.9,473.6" stroke="#505050" stroke-width="1"/>
<text x="731.6" y="472.6" font-size="5.8" fill="#2c2418" text-anchor="end">64</text>
<text x="741.0" y="476.5" font-size="6.5" fill="#40380f" text-anchor="start">VDD</text>
<path d="M710.4,473.6L723.2,473.6" stroke="#3535ae" stroke-width="1"/>
<path d="M723.2,480.0L735.9,480.0" stroke="#505050" stroke-width="1"/>
<text x="731.6" y="479.0" font-size="5.8" fill="#2c2418" text-anchor="end">19</text>
<text x="741.0" y="482.9" font-size="6.5" fill="#40380f" text-anchor="start">VDD</text>
<path d="M710.4,480.0L723.2,480.0" stroke="#3535ae" stroke-width="1"/>
<path d="M723.2,492.8L735.9,492.8" stroke="#505050" stroke-width="1"/>
<text x="731.6" y="491.8" font-size="5.8" fill="#2c2418" text-anchor="end">13</text>
<text x="741.0" y="495.7" font-size="6.5" fill="#40380f" text-anchor="start">VDD</text>
<path d="M710.4,492.8L723.2,492.8" stroke="#3535ae" stroke-width="1"/>
<path d="M710.4,460.8L710.4,506.4" stroke="#3535ae" stroke-width="1"/>
<path d="M710.4,506.4L710.4,512.0" stroke="#a84a4a" stroke-width="1"/>
<path d="M706.7,512.0L714.1,512.0" stroke="#a84a4a" stroke-width="1"/>
<text x="710.4" y="518.6" font-size="6.5" fill="#8a1c2c" text-anchor="middle" textLength="9.0" lengthAdjust="spacingAndGlyphs">3V3</text>
<path d="M729.5,627.3V588.4H760M729.5,601.6H760M729.5,614.3H760M729.5,620.5H760" stroke="#6c6c6c" stroke-width="1.1" fill="none"/>
<text x="733.2" y="597.6" font-size="5.2" fill="#5a2a3a" text-anchor="start" textLength="10.8" lengthAdjust="spacingAndGlyphs">Title</text>
<text x="747.6" y="598.4" font-size="8" fill="#8a2a10" text-anchor="start" font-weight="bold">WiFi</text>
<text x="733.2" y="610.6" font-size="5.2" fill="#5a3a5a" text-anchor="start" textLength="10.8" lengthAdjust="spacingAndGlyphs">Size</text>
<text x="748.6" y="610.6" font-size="5.2" fill="#7a3a8a" text-anchor="start">B</text>
<text x="733.2" y="619.4" font-size="5.2" fill="#7a3a4a" text-anchor="start" textLength="11.6" lengthAdjust="spacingAndGlyphs">Date:</text>
<text x="748.6" y="619.4" font-size="5.2" fill="#5a4aaa" text-anchor="start">N</text>
<text x="733.2" y="626.2" font-size="5.2" fill="#7a3a5a" text-anchor="start" textLength="10.0" lengthAdjust="spacingAndGlyphs">File:</text>
<text x="748.6" y="626.2" font-size="5.2" fill="#4a3aaa" text-anchor="start">C</text>
<circle cx="236.6" cy="223.8" r="1.7" fill="#000078"/>
<circle cx="224.1" cy="287.8" r="1.7" fill="#000078"/>
<circle cx="224.1" cy="313.4" r="1.7" fill="#000078"/>
<circle cx="134.4" cy="249.4" r="1.7" fill="#000078"/>
<circle cx="134.4" cy="255.8" r="1.7" fill="#000078"/>
<circle cx="134.4" cy="275.0" r="1.7" fill="#000078"/>
<circle cx="134.4" cy="281.4" r="1.7" fill="#000078"/>
<circle cx="134.4" cy="300.6" r="1.7" fill="#000078"/>
<circle cx="134.4" cy="326.2" r="1.7" fill="#000078"/>
<circle cx="134.4" cy="345.4" r="1.7" fill="#000078"/>
<circle cx="281.4" cy="307.3" r="1.7" fill="#000078"/>
<circle cx="281.4" cy="326.5" r="1.7" fill="#000078"/>
<circle cx="563.2" cy="281.5" r="1.7" fill="#000078"/>
<circle cx="505.4" cy="339.2" r="1.7" fill="#000078"/>
<circle cx="358.4" cy="339.2" r="1.7" fill="#000078"/>
<circle cx="390.4" cy="339.2" r="1.7" fill="#000078"/>
<circle cx="710.4" cy="467.2" r="1.7" fill="#000078"/>
<circle cx="710.4" cy="473.6" r="1.7" fill="#000078"/>
<circle cx="710.4" cy="480.0" r="1.7" fill="#000078"/>
<circle cx="710.4" cy="492.8" r="1.7" fill="#000078"/>
</svg>
<!-- SCH_END -->

<!-- callout -->
<svg class="abs" style="left:380px;top:410px" width="120" height="45" viewBox="380 410 120 45">
<path d="M389.6,417 H487 Q490.1,417 490.1,420 V437.2 Q490.1,440.2 487,440.2 H394.4 L386.4,448.2 V420 Q386.4,417 389.6,417 Z" fill="#fff" stroke="#2e2e2e" stroke-width="1.1" stroke-linejoin="round"/>
<path d="M399.6,422 H405.2 L409,425.6 V434.8 H399.6 Z" fill="#8fd4a8"/>
<path d="M405.2,422 L409,425.6 H405.2 Z" fill="#c2ead0"/>
<rect x="396.3" y="428.3" width="7.8" height="7.2" fill="#fff" stroke="#9adbb4" stroke-width="0.7"/>
<path d="M398,431.8 L399.6,433.4 L402.6,430.2" stroke="#6cc792" stroke-width="1" fill="none"/>
</svg>
<div class="t" style="left:415.5px;top:421px;font-size:11px;color:#1c1c28;letter-spacing:0.13px;-webkit-text-stroke:0">Req-0001 #1</div>
<!-- panel -->
<div id="panel" class="abs"></div>
<div class="abs" style="left:752px;top:67px;width:360px;height:1px;background:#2a2a2d"></div>
<div class="abs" style="left:752px;top:140px;width:360px;height:1px;background:#2a2a2d"></div>
<div class="t b" style="left:768px;top:42px;font-size:12px;letter-spacing:-0.08px">Requirements</div>
<!-- search -->
<div class="abs" style="left:769px;top:92px;width:287px;height:32px;border:1px solid #3a3a3e;border-radius:4px"></div>
<div class="t" style="left:808.5px;top:101px;color:#a4a4a8;letter-spacing:-0.21px">Search requirement</div>
<!-- scrollbar -->
<div class="abs" style="left:1102px;top:147px;width:4px;height:310px;background:#48484b"></div>

<!-- cards -->
<div class="card" style="top:153px;height:143.5px;background:#0768e6"></div>
<div class="card" style="top:313px;height:92px"></div>
<div class="card" style="top:421px;height:92px"></div>
<div class="card" style="top:529px;height:92px"></div>

<!-- card 1 content -->
<div class="t" style="left:809.3px;top:161px;letter-spacing:-0.3px;text-decoration:underline;text-underline-offset:1px">Req-0001</div>
<div class="badge" style="left:1028px;top:161px;width:36px"></div>
<div class="t b" style="left:1031.3px;top:160px;font-size:11.5px;letter-spacing:0.05px">0/1</div>
<div class="t" style="left:785.3px;top:193px;letter-spacing:-0.2px">All Electrical Rule Check issues shall be resolved</div>
<div class="t" style="left:785.3px;top:221px;letter-spacing:-0.2px;color:#cfe1fb">Placed: <span style="color:#fff;text-decoration:underline;letter-spacing:-1px">#1</span></div>
<div class="abs" style="left:785px;top:252px;width:135px;height:23px;background:#161618;border-top:1px solid #2a2a2d;border-radius:4px 4px 0 0"></div>
<div class="abs" style="left:929px;top:252px;width:135px;height:23px;background:#2c2c2e;border-top:1px solid #353538;border-radius:4px 4px 0 0"></div>
<div class="t b" style="left:837px;top:257px;font-size:12px">Place</div>
<div class="t b" style="left:995.5px;top:257px;font-size:12px;letter-spacing:-0.1px">Task</div>

<!-- card 3 peek text -->
<div class="t" style="left:785.5px;top:475px;letter-spacing:-0.2px">resolved.</div>

<!-- card 4 content -->
<div class="t" style="left:809.3px;top:537px;letter-spacing:-0.1px;color:#4b9cf5">Req-0004</div>
<div class="badge" style="left:1026px;top:537px;width:38px"></div>
<div class="t b" style="left:1030.3px;top:536px;font-size:11.5px;letter-spacing:0.05px">0/2</div>
<div class="t" style="left:785.3px;top:569px;letter-spacing:-0.05px">Differential pair layout must be checked for</div>
<div class="t" style="left:785.3px;top:585px;letter-spacing:-0.07px">specified transient performance as 20.0us.</div>

<!-- popup -->
<div class="abs" style="left:785px;top:281px;width:279px;height:202px;background:#0b0b0c;border:1px solid #262628;border-radius:4px;box-shadow:0 1px 6px rgba(0,0,0,0.35)"></div>
<div class="abs" style="left:802px;top:298px;width:245px;height:32px;background:#0e0e10;border:1px solid #2a2a2d;border-radius:4px"></div>
<div class="abs" style="left:809px;top:302px;width:179px;height:24px;background:#151517;border-radius:3px"></div>
<div class="t" style="left:814.5px;top:306px;letter-spacing:-0.22px">pavel.demidov@altium.com</div>
<div class="abs" style="left:802px;top:338px;width:245px;height:80px;background:#131316;border:1px solid #4a8fdc;border-radius:4px"></div>
<div class="t" style="left:818.3px;top:346px;letter-spacing:-0.36px">Complete ERC assessment.</div>
<div class="abs" style="left:974px;top:347px;width:1px;height:14px;background:#fff"></div>
<div class="abs" style="left:879.5px;top:426.5px;width:79px;height:31px;background:#1b7ef2;border-radius:4px"></div>
<div class="abs" style="left:967px;top:426.5px;width:80px;height:31px;background:#141416;border:1px solid #3a3a3e;border-radius:4px"></div>
<div class="t b" style="left:899.8px;top:434px;font-size:12px;letter-spacing:-0.3px">Assign</div>
<div class="t b" style="left:987.8px;top:434px;font-size:12px;letter-spacing:-0.03px">Cancel</div>
<!-- orange highlight -->
<div class="abs" style="left:777px;top:272.7px;width:295px;height:218.3px;border:3.3px solid #fc7004;border-radius:6px"></div>
<svg class="abs" style="left:752px;top:32px;pointer-events:none" width="360" height="607" viewBox="752 32 360 607" fill="none" stroke="#e8e8e8" stroke-width="1.2" stroke-linecap="round" stroke-linejoin="round">
<!-- close -->
<path d="M1085.8,43.8 L1094.2,52.2 M1094.2,43.8 L1085.8,52.2" stroke-width="1.1"/>
<!-- search -->
<circle cx="790" cy="107" r="6.2" stroke="#d8d8d8"/>
<path d="M794.6,111.7 L797.6,114.8" stroke="#d8d8d8" stroke-width="1.3"/>
<!-- filter -->
<path d="M1071.6,103.2 H1082.2 L1078.4,108 V113.6 L1075.4,112 V108 Z" stroke-width="1.2"/>
<!-- chevrons -->
<path d="M1053.6,167.2 L1056.3,169.8 L1059,167.2" stroke-width="1.2"/>
<path d="M1053.6,543.2 L1056.3,545.8 L1059,543.2" stroke-width="1.2"/>
<!-- plus -->
<path d="M979.2,257 V271.4 M972,264.2 H986.4" stroke-width="1.1" stroke="#f0f0f0" stroke-linecap="butt"/>
<!-- chip x -->
<path d="M976,310.8 L981.4,316.2 M981.4,310.8 L976,316.2" stroke-width="1" stroke="#e0e0e0"/>
<!-- req icons -->
<g id="ri1" stroke="none">
<path d="M790.2,161.8 H795.6 L799,165.2 V175.6 H790.2 Z" fill="#8fd4a8"/>
<path d="M795.6,161.8 L799,165.2 H795.6 Z" fill="#bfe8cd"/>
<rect x="786" y="168.2" width="8.8" height="8.6" fill="#fff"/>
<path d="M787.8,172.4 L789.6,174.2 L793,170.4" stroke="#5cc084" stroke-width="1.1" fill="none"/>
</g>
<g stroke="none" transform="translate(0,376)">
<path d="M790.2,161.8 H795.6 L799,165.2 V175.6 H790.2 Z" fill="#8fd4a8"/>
<path d="M795.6,161.8 L799,165.2 H795.6 Z" fill="#bfe8cd"/>
<rect x="786" y="168.2" width="8.8" height="8.6" fill="#fff"/>
<path d="M787.8,172.4 L789.6,174.2 L793,170.4" stroke="#5cc084" stroke-width="1.1" fill="none"/>
</g>
<!-- cursor hand -->
<path d="M915.5,452.2 Q915.5,450.4 917,450.4 Q918.5,450.4 918.5,452.2 V457 Q918.6,455.5 920.1,455.5 Q921.6,455.5 921.6,457.2 V457.8 Q921.8,456.4 923.1,456.4 Q924.5,456.4 924.5,458 V458.8 Q924.8,457.7 926,457.7 Q927.4,457.7 927.4,459.4 V466.5 Q927.4,470 925.4,472.2 Q924.2,473.3 921.5,473.3 Q918.4,473.3 916.6,471.4 L911.2,465.4 Q910.3,464.2 911.4,463.4 Q912.4,462.8 913.6,463.8 L915.5,465.6 Z" fill="#fff" stroke="#111" stroke-width="0.9"/>
<path d="M918.5,457 V461.4 M921.6,457.8 V461.4 M924.5,458.8 V461.6" stroke="#222" stroke-width="0.7"/>
</svg>

<!-- bottom strip -->
<div class="abs" style="left:0;top:639px;width:1112px;height:2px;background:#050506"></div>
</body>
</html>
